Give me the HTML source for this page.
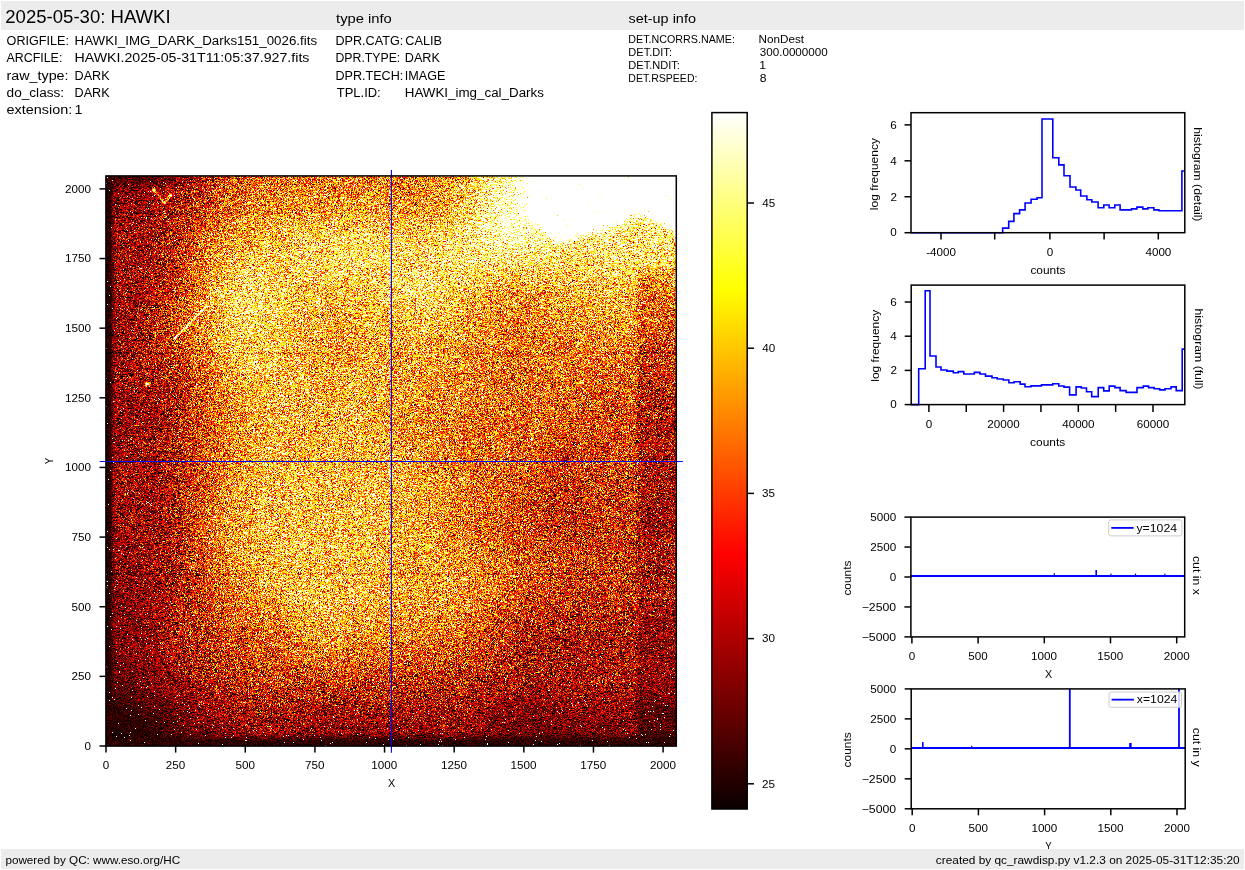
<!DOCTYPE html>
<html><head><meta charset="utf-8"><title>HAWKI</title>
<style>
html,body{margin:0;padding:0;background:#fff;width:1245px;height:870px;overflow:hidden;position:relative}
#hm{position:absolute;left:106px;top:176px;width:570px;height:570px}
svg.main{position:absolute;left:0;top:0}
text{font-family:"Liberation Sans",sans-serif}
</style></head><body>
<svg style="position:absolute;left:106px;top:176px" width="570" height="570" shape-rendering="crispEdges"><rect x="0" y="0" width="30" height="30" fill="#620502"/><rect x="30" y="0" width="30" height="30" fill="#881305"/><rect x="60" y="0" width="30" height="30" fill="#a32206"/><rect x="90" y="0" width="30" height="30" fill="#c2430a"/><rect x="120" y="0" width="30" height="30" fill="#de6913"/><rect x="150" y="0" width="30" height="30" fill="#e57b1b"/><rect x="180" y="0" width="30" height="30" fill="#ea841d"/><rect x="210" y="0" width="30" height="30" fill="#e98620"/><rect x="240" y="0" width="30" height="30" fill="#eb8820"/><rect x="270" y="0" width="30" height="30" fill="#e0832a"/><rect x="300" y="0" width="30" height="30" fill="#e9881d"/><rect x="330" y="0" width="30" height="30" fill="#efa335"/><rect x="360" y="0" width="30" height="30" fill="#f7d372"/><rect x="390" y="0" width="30" height="30" fill="#f9f2c1"/><rect x="420" y="0" width="30" height="30" fill="#f9f9f7"/><rect x="450" y="0" width="30" height="30" fill="#f9f9f9"/><rect x="480" y="0" width="30" height="30" fill="#f9f9f8"/><rect x="510" y="0" width="30" height="30" fill="#f9f9f8"/><rect x="540" y="0" width="30" height="30" fill="#f5f5f5"/><rect x="0" y="30" width="30" height="30" fill="#7d0b02"/><rect x="30" y="30" width="30" height="30" fill="#9f1904"/><rect x="60" y="30" width="30" height="30" fill="#b93304"/><rect x="90" y="30" width="30" height="30" fill="#de5f0e"/><rect x="120" y="30" width="30" height="30" fill="#ee8a20"/><rect x="150" y="30" width="30" height="30" fill="#f59f2f"/><rect x="180" y="30" width="30" height="30" fill="#f5a934"/><rect x="210" y="30" width="30" height="30" fill="#f8ae3b"/><rect x="240" y="30" width="30" height="30" fill="#f8b63f"/><rect x="270" y="30" width="30" height="30" fill="#f0a543"/><rect x="300" y="30" width="30" height="30" fill="#f8b03b"/><rect x="330" y="30" width="30" height="30" fill="#fbc44e"/><rect x="360" y="30" width="30" height="30" fill="#fee48e"/><rect x="390" y="30" width="30" height="30" fill="#fffac8"/><rect x="420" y="30" width="30" height="30" fill="#fffced"/><rect x="450" y="30" width="30" height="30" fill="#fffefc"/><rect x="480" y="30" width="30" height="30" fill="#fefced"/><rect x="510" y="30" width="30" height="30" fill="#feefb9"/><rect x="540" y="30" width="30" height="30" fill="#faf2cd"/><rect x="0" y="60" width="30" height="30" fill="#820f01"/><rect x="30" y="60" width="30" height="30" fill="#a11c04"/><rect x="60" y="60" width="30" height="30" fill="#c43f09"/><rect x="90" y="60" width="30" height="30" fill="#ec8521"/><rect x="120" y="60" width="30" height="30" fill="#f6ac39"/><rect x="150" y="60" width="30" height="30" fill="#fabd46"/><rect x="180" y="60" width="30" height="30" fill="#fbc75a"/><rect x="210" y="60" width="30" height="30" fill="#fdce5d"/><rect x="240" y="60" width="30" height="30" fill="#fed562"/><rect x="270" y="60" width="30" height="30" fill="#f4ca62"/><rect x="300" y="60" width="30" height="30" fill="#fccb60"/><rect x="330" y="60" width="30" height="30" fill="#fdd96f"/><rect x="360" y="60" width="30" height="30" fill="#fde284"/><rect x="390" y="60" width="30" height="30" fill="#fee894"/><rect x="420" y="60" width="30" height="30" fill="#fee587"/><rect x="450" y="60" width="30" height="30" fill="#fdde83"/><rect x="480" y="60" width="30" height="30" fill="#fdd975"/><rect x="510" y="60" width="30" height="30" fill="#fcd973"/><rect x="540" y="60" width="30" height="30" fill="#f9d66e"/><rect x="0" y="90" width="30" height="30" fill="#821203"/><rect x="30" y="90" width="30" height="30" fill="#ab1f04"/><rect x="60" y="90" width="30" height="30" fill="#d04808"/><rect x="90" y="90" width="30" height="30" fill="#f29a2c"/><rect x="120" y="90" width="30" height="30" fill="#fbc859"/><rect x="150" y="90" width="30" height="30" fill="#fdca56"/><rect x="180" y="90" width="30" height="30" fill="#fac251"/><rect x="210" y="90" width="30" height="30" fill="#fcc54f"/><rect x="240" y="90" width="30" height="30" fill="#fbc250"/><rect x="270" y="90" width="30" height="30" fill="#f2c465"/><rect x="300" y="90" width="30" height="30" fill="#fdd66f"/><rect x="330" y="90" width="30" height="30" fill="#fbce5c"/><rect x="360" y="90" width="30" height="30" fill="#fbc550"/><rect x="390" y="90" width="30" height="30" fill="#f8b241"/><rect x="420" y="90" width="30" height="30" fill="#f9b646"/><rect x="450" y="90" width="30" height="30" fill="#fabe49"/><rect x="480" y="90" width="30" height="30" fill="#fac453"/><rect x="510" y="90" width="30" height="30" fill="#f8b644"/><rect x="540" y="90" width="30" height="30" fill="#ee9526"/><rect x="0" y="120" width="30" height="30" fill="#7e0d02"/><rect x="30" y="120" width="30" height="30" fill="#af2804"/><rect x="60" y="120" width="30" height="30" fill="#da6312"/><rect x="90" y="120" width="30" height="30" fill="#f5a339"/><rect x="120" y="120" width="30" height="30" fill="#fcd160"/><rect x="150" y="120" width="30" height="30" fill="#fdce57"/><rect x="180" y="120" width="30" height="30" fill="#f9b842"/><rect x="210" y="120" width="30" height="30" fill="#f7ad3d"/><rect x="240" y="120" width="30" height="30" fill="#f9b83f"/><rect x="270" y="120" width="30" height="30" fill="#f1b44b"/><rect x="300" y="120" width="30" height="30" fill="#fbc655"/><rect x="330" y="120" width="30" height="30" fill="#f9b843"/><rect x="360" y="120" width="30" height="30" fill="#f49c2d"/><rect x="390" y="120" width="30" height="30" fill="#f18b22"/><rect x="420" y="120" width="30" height="30" fill="#f19025"/><rect x="450" y="120" width="30" height="30" fill="#f49f2b"/><rect x="480" y="120" width="30" height="30" fill="#f6a430"/><rect x="510" y="120" width="30" height="30" fill="#f09228"/><rect x="540" y="120" width="30" height="30" fill="#e06912"/><rect x="0" y="150" width="30" height="30" fill="#7e0e01"/><rect x="30" y="150" width="30" height="30" fill="#af2903"/><rect x="60" y="150" width="30" height="30" fill="#d55b11"/><rect x="90" y="150" width="30" height="30" fill="#ef982e"/><rect x="120" y="150" width="30" height="30" fill="#fac24e"/><rect x="150" y="150" width="30" height="30" fill="#fac147"/><rect x="180" y="150" width="30" height="30" fill="#f7ab39"/><rect x="210" y="150" width="30" height="30" fill="#f59f2f"/><rect x="240" y="150" width="30" height="30" fill="#f5a633"/><rect x="270" y="150" width="30" height="30" fill="#eb9f3a"/><rect x="300" y="150" width="30" height="30" fill="#f8ac39"/><rect x="330" y="150" width="30" height="30" fill="#f39f2c"/><rect x="360" y="150" width="30" height="30" fill="#f18e23"/><rect x="390" y="150" width="30" height="30" fill="#eb7819"/><rect x="420" y="150" width="30" height="30" fill="#e97f1a"/><rect x="450" y="150" width="30" height="30" fill="#ed811f"/><rect x="480" y="150" width="30" height="30" fill="#ee8521"/><rect x="510" y="150" width="30" height="30" fill="#e47619"/><rect x="540" y="150" width="30" height="30" fill="#ce4d0e"/><rect x="0" y="180" width="30" height="30" fill="#811002"/><rect x="30" y="180" width="30" height="30" fill="#ae2605"/><rect x="60" y="180" width="30" height="30" fill="#c24008"/><rect x="90" y="180" width="30" height="30" fill="#e97a1b"/><rect x="120" y="180" width="30" height="30" fill="#f8b440"/><rect x="150" y="180" width="30" height="30" fill="#faba48"/><rect x="180" y="180" width="30" height="30" fill="#f8af41"/><rect x="210" y="180" width="30" height="30" fill="#f7a833"/><rect x="240" y="180" width="30" height="30" fill="#f6a937"/><rect x="270" y="180" width="30" height="30" fill="#eb9a3c"/><rect x="300" y="180" width="30" height="30" fill="#f49c2c"/><rect x="330" y="180" width="30" height="30" fill="#f29024"/><rect x="360" y="180" width="30" height="30" fill="#ec7e1d"/><rect x="390" y="180" width="30" height="30" fill="#e47617"/><rect x="420" y="180" width="30" height="30" fill="#e77513"/><rect x="450" y="180" width="30" height="30" fill="#ea7817"/><rect x="480" y="180" width="30" height="30" fill="#e56b17"/><rect x="510" y="180" width="30" height="30" fill="#d65b10"/><rect x="540" y="180" width="30" height="30" fill="#c43d0a"/><rect x="0" y="210" width="30" height="30" fill="#7b0b02"/><rect x="30" y="210" width="30" height="30" fill="#a01603"/><rect x="60" y="210" width="30" height="30" fill="#b83406"/><rect x="90" y="210" width="30" height="30" fill="#e06a10"/><rect x="120" y="210" width="30" height="30" fill="#f4992b"/><rect x="150" y="210" width="30" height="30" fill="#f9b03e"/><rect x="180" y="210" width="30" height="30" fill="#f6ad3f"/><rect x="210" y="210" width="30" height="30" fill="#f8a935"/><rect x="240" y="210" width="30" height="30" fill="#f5ac3b"/><rect x="270" y="210" width="30" height="30" fill="#ec9c37"/><rect x="300" y="210" width="30" height="30" fill="#f09324"/><rect x="330" y="210" width="30" height="30" fill="#ef8a24"/><rect x="360" y="210" width="30" height="30" fill="#e97b1a"/><rect x="390" y="210" width="30" height="30" fill="#e57519"/><rect x="420" y="210" width="30" height="30" fill="#e87016"/><rect x="450" y="210" width="30" height="30" fill="#de6813"/><rect x="480" y="210" width="30" height="30" fill="#d7580c"/><rect x="510" y="210" width="30" height="30" fill="#cc4e0c"/><rect x="540" y="210" width="30" height="30" fill="#ac2c04"/><rect x="0" y="240" width="30" height="30" fill="#7a0b02"/><rect x="30" y="240" width="30" height="30" fill="#9f1903"/><rect x="60" y="240" width="30" height="30" fill="#ba3607"/><rect x="90" y="240" width="30" height="30" fill="#e06310"/><rect x="120" y="240" width="30" height="30" fill="#f29727"/><rect x="150" y="240" width="30" height="30" fill="#f9ad38"/><rect x="180" y="240" width="30" height="30" fill="#f8ac3b"/><rect x="210" y="240" width="30" height="30" fill="#f6ac3a"/><rect x="240" y="240" width="30" height="30" fill="#f6ad3c"/><rect x="270" y="240" width="30" height="30" fill="#ec9935"/><rect x="300" y="240" width="30" height="30" fill="#f18e21"/><rect x="330" y="240" width="30" height="30" fill="#ec7c1d"/><rect x="360" y="240" width="30" height="30" fill="#e67013"/><rect x="390" y="240" width="30" height="30" fill="#e56512"/><rect x="420" y="240" width="30" height="30" fill="#e06813"/><rect x="450" y="240" width="30" height="30" fill="#d8570c"/><rect x="480" y="240" width="30" height="30" fill="#d7500b"/><rect x="510" y="240" width="30" height="30" fill="#c94209"/><rect x="540" y="240" width="30" height="30" fill="#a81e04"/><rect x="0" y="270" width="30" height="30" fill="#7f0d0b"/><rect x="30" y="270" width="30" height="30" fill="#99150a"/><rect x="60" y="270" width="30" height="30" fill="#b5320d"/><rect x="90" y="270" width="30" height="30" fill="#d96219"/><rect x="120" y="270" width="30" height="30" fill="#ea9130"/><rect x="150" y="270" width="30" height="30" fill="#f1a944"/><rect x="180" y="270" width="30" height="30" fill="#efa93f"/><rect x="210" y="270" width="30" height="30" fill="#efaa43"/><rect x="240" y="270" width="30" height="30" fill="#efa63f"/><rect x="270" y="270" width="30" height="30" fill="#e69c46"/><rect x="300" y="270" width="30" height="30" fill="#e98f30"/><rect x="330" y="270" width="30" height="30" fill="#e17b24"/><rect x="360" y="270" width="30" height="30" fill="#de6d1d"/><rect x="390" y="270" width="30" height="30" fill="#db671c"/><rect x="420" y="270" width="30" height="30" fill="#d35213"/><rect x="450" y="270" width="30" height="30" fill="#c74212"/><rect x="480" y="270" width="30" height="30" fill="#ca4613"/><rect x="510" y="270" width="30" height="30" fill="#c14213"/><rect x="540" y="270" width="30" height="30" fill="#9f1d0c"/><rect x="0" y="300" width="30" height="30" fill="#831001"/><rect x="30" y="300" width="30" height="30" fill="#9d1604"/><rect x="60" y="300" width="30" height="30" fill="#ba3204"/><rect x="90" y="300" width="30" height="30" fill="#e06711"/><rect x="120" y="300" width="30" height="30" fill="#f5a231"/><rect x="150" y="300" width="30" height="30" fill="#f7b144"/><rect x="180" y="300" width="30" height="30" fill="#f9bc44"/><rect x="210" y="300" width="30" height="30" fill="#f7b144"/><rect x="240" y="300" width="30" height="30" fill="#fab646"/><rect x="270" y="300" width="30" height="30" fill="#efa941"/><rect x="300" y="300" width="30" height="30" fill="#f5a12d"/><rect x="330" y="300" width="30" height="30" fill="#f18e23"/><rect x="360" y="300" width="30" height="30" fill="#e77217"/><rect x="390" y="300" width="30" height="30" fill="#df6010"/><rect x="420" y="300" width="30" height="30" fill="#c9460a"/><rect x="450" y="300" width="30" height="30" fill="#c53c06"/><rect x="480" y="300" width="30" height="30" fill="#c8470a"/><rect x="510" y="300" width="30" height="30" fill="#bd3c09"/><rect x="540" y="300" width="30" height="30" fill="#9f1a02"/><rect x="0" y="330" width="30" height="30" fill="#820e01"/><rect x="30" y="330" width="30" height="30" fill="#991401"/><rect x="60" y="330" width="30" height="30" fill="#b63204"/><rect x="90" y="330" width="30" height="30" fill="#e77217"/><rect x="120" y="330" width="30" height="30" fill="#f5a130"/><rect x="150" y="330" width="30" height="30" fill="#f9b647"/><rect x="180" y="330" width="30" height="30" fill="#fab844"/><rect x="210" y="330" width="30" height="30" fill="#fab745"/><rect x="240" y="330" width="30" height="30" fill="#f9b740"/><rect x="270" y="330" width="30" height="30" fill="#efa740"/><rect x="300" y="330" width="30" height="30" fill="#f6a430"/><rect x="330" y="330" width="30" height="30" fill="#ee881e"/><rect x="360" y="330" width="30" height="30" fill="#e36c15"/><rect x="390" y="330" width="30" height="30" fill="#da590f"/><rect x="420" y="330" width="30" height="30" fill="#c8430b"/><rect x="450" y="330" width="30" height="30" fill="#c03a08"/><rect x="480" y="330" width="30" height="30" fill="#c64208"/><rect x="510" y="330" width="30" height="30" fill="#ba3506"/><rect x="540" y="330" width="30" height="30" fill="#951503"/><rect x="0" y="360" width="30" height="30" fill="#7b0904"/><rect x="30" y="360" width="30" height="30" fill="#9d1603"/><rect x="60" y="360" width="30" height="30" fill="#b73308"/><rect x="90" y="360" width="30" height="30" fill="#e26713"/><rect x="120" y="360" width="30" height="30" fill="#f4a232"/><rect x="150" y="360" width="30" height="30" fill="#f8b23e"/><rect x="180" y="360" width="30" height="30" fill="#fabd49"/><rect x="210" y="360" width="30" height="30" fill="#fbba47"/><rect x="240" y="360" width="30" height="30" fill="#f9ba43"/><rect x="270" y="360" width="30" height="30" fill="#eda540"/><rect x="300" y="360" width="30" height="30" fill="#f4a62f"/><rect x="330" y="360" width="30" height="30" fill="#f29223"/><rect x="360" y="360" width="30" height="30" fill="#e97e1a"/><rect x="390" y="360" width="30" height="30" fill="#db620f"/><rect x="420" y="360" width="30" height="30" fill="#d4540c"/><rect x="450" y="360" width="30" height="30" fill="#cb4708"/><rect x="480" y="360" width="30" height="30" fill="#c94007"/><rect x="510" y="360" width="30" height="30" fill="#bc3606"/><rect x="540" y="360" width="30" height="30" fill="#a52005"/><rect x="0" y="390" width="30" height="30" fill="#720902"/><rect x="30" y="390" width="30" height="30" fill="#951002"/><rect x="60" y="390" width="30" height="30" fill="#ad2b05"/><rect x="90" y="390" width="30" height="30" fill="#d5580d"/><rect x="120" y="390" width="30" height="30" fill="#ed8921"/><rect x="150" y="390" width="30" height="30" fill="#f7ac3d"/><rect x="180" y="390" width="30" height="30" fill="#f8b744"/><rect x="210" y="390" width="30" height="30" fill="#f8b440"/><rect x="240" y="390" width="30" height="30" fill="#f9b440"/><rect x="270" y="390" width="30" height="30" fill="#eda13d"/><rect x="300" y="390" width="30" height="30" fill="#f4a02b"/><rect x="330" y="390" width="30" height="30" fill="#f29b2e"/><rect x="360" y="390" width="30" height="30" fill="#ee831c"/><rect x="390" y="390" width="30" height="30" fill="#e36912"/><rect x="420" y="390" width="30" height="30" fill="#d4500d"/><rect x="450" y="390" width="30" height="30" fill="#c74109"/><rect x="480" y="390" width="30" height="30" fill="#c64008"/><rect x="510" y="390" width="30" height="30" fill="#b83605"/><rect x="540" y="390" width="30" height="30" fill="#a12306"/><rect x="0" y="420" width="30" height="30" fill="#6d0502"/><rect x="30" y="420" width="30" height="30" fill="#980e02"/><rect x="60" y="420" width="30" height="30" fill="#b32c05"/><rect x="90" y="420" width="30" height="30" fill="#cd4c0a"/><rect x="120" y="420" width="30" height="30" fill="#e97316"/><rect x="150" y="420" width="30" height="30" fill="#ef8b20"/><rect x="180" y="420" width="30" height="30" fill="#f6ac36"/><rect x="210" y="420" width="30" height="30" fill="#f9b242"/><rect x="240" y="420" width="30" height="30" fill="#f6a93a"/><rect x="270" y="420" width="30" height="30" fill="#eb9634"/><rect x="300" y="420" width="30" height="30" fill="#f3942b"/><rect x="330" y="420" width="30" height="30" fill="#ee8d26"/><rect x="360" y="420" width="30" height="30" fill="#e77118"/><rect x="390" y="420" width="30" height="30" fill="#d1500b"/><rect x="420" y="420" width="30" height="30" fill="#c13808"/><rect x="450" y="420" width="30" height="30" fill="#b83607"/><rect x="480" y="420" width="30" height="30" fill="#b93204"/><rect x="510" y="420" width="30" height="30" fill="#af2a07"/><rect x="540" y="420" width="30" height="30" fill="#991703"/><rect x="0" y="450" width="30" height="30" fill="#700502"/><rect x="30" y="450" width="30" height="30" fill="#8e0e04"/><rect x="60" y="450" width="30" height="30" fill="#b12905"/><rect x="90" y="450" width="30" height="30" fill="#c03c08"/><rect x="120" y="450" width="30" height="30" fill="#d2500b"/><rect x="150" y="450" width="30" height="30" fill="#e16613"/><rect x="180" y="450" width="30" height="30" fill="#ec821f"/><rect x="210" y="450" width="30" height="30" fill="#f29528"/><rect x="240" y="450" width="30" height="30" fill="#ec831d"/><rect x="270" y="450" width="30" height="30" fill="#e17925"/><rect x="300" y="450" width="30" height="30" fill="#e77618"/><rect x="330" y="450" width="30" height="30" fill="#e16a13"/><rect x="360" y="450" width="30" height="30" fill="#d4500a"/><rect x="390" y="450" width="30" height="30" fill="#bb3607"/><rect x="420" y="450" width="30" height="30" fill="#a62302"/><rect x="450" y="450" width="30" height="30" fill="#a82503"/><rect x="480" y="450" width="30" height="30" fill="#a62002"/><rect x="510" y="450" width="30" height="30" fill="#a21c03"/><rect x="540" y="450" width="30" height="30" fill="#8c0c01"/><rect x="0" y="480" width="30" height="30" fill="#5c0202"/><rect x="30" y="480" width="30" height="30" fill="#830702"/><rect x="60" y="480" width="30" height="30" fill="#991802"/><rect x="90" y="480" width="30" height="30" fill="#b12e04"/><rect x="120" y="480" width="30" height="30" fill="#c33e05"/><rect x="150" y="480" width="30" height="30" fill="#d1500b"/><rect x="180" y="480" width="30" height="30" fill="#d2550c"/><rect x="210" y="480" width="30" height="30" fill="#d8580f"/><rect x="240" y="480" width="30" height="30" fill="#d5540d"/><rect x="270" y="480" width="30" height="30" fill="#c74a15"/><rect x="300" y="480" width="30" height="30" fill="#ca470a"/><rect x="330" y="480" width="30" height="30" fill="#c34309"/><rect x="360" y="480" width="30" height="30" fill="#b83406"/><rect x="390" y="480" width="30" height="30" fill="#ac2704"/><rect x="420" y="480" width="30" height="30" fill="#a12103"/><rect x="450" y="480" width="30" height="30" fill="#a71c05"/><rect x="480" y="480" width="30" height="30" fill="#a82004"/><rect x="510" y="480" width="30" height="30" fill="#a21903"/><rect x="540" y="480" width="30" height="30" fill="#8f0a02"/><rect x="0" y="510" width="30" height="30" fill="#3d0202"/><rect x="30" y="510" width="30" height="30" fill="#630403"/><rect x="60" y="510" width="30" height="30" fill="#820803"/><rect x="90" y="510" width="30" height="30" fill="#9f1504"/><rect x="120" y="510" width="30" height="30" fill="#aa2203"/><rect x="150" y="510" width="30" height="30" fill="#b02b04"/><rect x="180" y="510" width="30" height="30" fill="#b02603"/><rect x="210" y="510" width="30" height="30" fill="#a82603"/><rect x="240" y="510" width="30" height="30" fill="#ae2806"/><rect x="270" y="510" width="30" height="30" fill="#a7250c"/><rect x="300" y="510" width="30" height="30" fill="#ad2203"/><rect x="330" y="510" width="30" height="30" fill="#ab2303"/><rect x="360" y="510" width="30" height="30" fill="#a31902"/><rect x="390" y="510" width="30" height="30" fill="#941001"/><rect x="420" y="510" width="30" height="30" fill="#8c0b01"/><rect x="450" y="510" width="30" height="30" fill="#961203"/><rect x="480" y="510" width="30" height="30" fill="#940d01"/><rect x="510" y="510" width="30" height="30" fill="#880c01"/><rect x="540" y="510" width="30" height="30" fill="#6f0604"/><rect x="0" y="540" width="30" height="30" fill="#290202"/><rect x="30" y="540" width="30" height="30" fill="#330101"/><rect x="60" y="540" width="30" height="30" fill="#500302"/><rect x="90" y="540" width="30" height="30" fill="#680603"/><rect x="120" y="540" width="30" height="30" fill="#750b03"/><rect x="150" y="540" width="30" height="30" fill="#790c03"/><rect x="180" y="540" width="30" height="30" fill="#750c02"/><rect x="210" y="540" width="30" height="30" fill="#750a03"/><rect x="240" y="540" width="30" height="30" fill="#730902"/><rect x="270" y="540" width="30" height="30" fill="#6f090c"/><rect x="300" y="540" width="30" height="30" fill="#730a01"/><rect x="330" y="540" width="30" height="30" fill="#770d04"/><rect x="360" y="540" width="30" height="30" fill="#6d0602"/><rect x="390" y="540" width="30" height="30" fill="#5f0301"/><rect x="420" y="540" width="30" height="30" fill="#5d0303"/><rect x="450" y="540" width="30" height="30" fill="#5f0201"/><rect x="480" y="540" width="30" height="30" fill="#630301"/><rect x="510" y="540" width="30" height="30" fill="#5b0502"/><rect x="540" y="540" width="30" height="30" fill="#470404"/></svg>
<canvas id="hm" width="570" height="570"></canvas>
<svg class="main" width="1245" height="870" viewBox="0 0 1245 870">
<rect x="1" y="1" width="1243" height="29" fill="#ececec"/>
<rect x="1" y="849" width="1243" height="20" fill="#ececec"/>
<text x="5.27" y="22.90" font-size="17.75" textLength="165.40" lengthAdjust="spacingAndGlyphs" fill="#000">2025-05-30: HAWKI</text>
<text x="336.06" y="22.90" font-size="13.23" textLength="55.78" lengthAdjust="spacingAndGlyphs" fill="#000">type info</text>
<text x="628.52" y="23.00" font-size="13.23" textLength="67.42" lengthAdjust="spacingAndGlyphs" fill="#000">set-up info</text>
<text x="6.60" y="45.20" font-size="13.23" textLength="62.34" lengthAdjust="spacingAndGlyphs" fill="#000">ORIGFILE:</text>
<text x="74.57" y="45.20" font-size="13.23" textLength="242.54" lengthAdjust="spacingAndGlyphs" fill="#000">HAWKI_IMG_DARK_Darks151_0026.fits</text>
<text x="6.60" y="61.90" font-size="13.23" textLength="55.73" lengthAdjust="spacingAndGlyphs" fill="#000">ARCFILE:</text>
<text x="74.57" y="61.90" font-size="13.23" textLength="234.86" lengthAdjust="spacingAndGlyphs" fill="#000">HAWKI.2025-05-31T11:05:37.927.fits</text>
<text x="6.60" y="79.90" font-size="13.23" textLength="61.90" lengthAdjust="spacingAndGlyphs" fill="#000">raw_type:</text>
<text x="74.57" y="79.90" font-size="13.23" textLength="35.12" lengthAdjust="spacingAndGlyphs" fill="#000">DARK</text>
<text x="6.60" y="97.20" font-size="13.23" textLength="57.53" lengthAdjust="spacingAndGlyphs" fill="#000">do_class:</text>
<text x="74.57" y="97.20" font-size="13.23" textLength="35.12" lengthAdjust="spacingAndGlyphs" fill="#000">DARK</text>
<text x="6.60" y="113.80" font-size="13.23" textLength="65.67" lengthAdjust="spacingAndGlyphs" fill="#000">extension:</text>
<text x="74.41" y="113.80" font-size="13.23" textLength="8.02" lengthAdjust="spacingAndGlyphs" fill="#000">1</text>
<text x="335.47" y="45.00" font-size="13.23" textLength="67.76" lengthAdjust="spacingAndGlyphs" fill="#000">DPR.CATG:</text>
<text x="405.29" y="45.00" font-size="13.23" textLength="36.80" lengthAdjust="spacingAndGlyphs" fill="#000">CALIB</text>
<text x="335.47" y="61.80" font-size="13.23" textLength="64.81" lengthAdjust="spacingAndGlyphs" fill="#000">DPR.TYPE:</text>
<text x="404.77" y="61.80" font-size="13.23" textLength="35.12" lengthAdjust="spacingAndGlyphs" fill="#000">DARK</text>
<text x="335.47" y="79.50" font-size="13.23" textLength="67.79" lengthAdjust="spacingAndGlyphs" fill="#000">DPR.TECH:</text>
<text x="404.77" y="79.50" font-size="13.23" textLength="40.71" lengthAdjust="spacingAndGlyphs" fill="#000">IMAGE</text>
<text x="336.74" y="96.80" font-size="13.23" textLength="43.98" lengthAdjust="spacingAndGlyphs" fill="#000">TPL.ID:</text>
<text x="404.77" y="96.80" font-size="13.23" textLength="139.13" lengthAdjust="spacingAndGlyphs" fill="#000">HAWKI_img_cal_Darks</text>
<text x="628.36" y="42.90" font-size="11.13" textLength="106.54" lengthAdjust="spacingAndGlyphs" fill="#000">DET.NCORRS.NAME:</text>
<text x="758.56" y="42.90" font-size="11.13" textLength="45.49" lengthAdjust="spacingAndGlyphs" fill="#000">NonDest</text>
<text x="628.36" y="55.70" font-size="11.13" textLength="43.62" lengthAdjust="spacingAndGlyphs" fill="#000">DET.DIT:</text>
<text x="759.73" y="55.70" font-size="11.13" textLength="68.05" lengthAdjust="spacingAndGlyphs" fill="#000">300.0000000</text>
<text x="628.36" y="68.60" font-size="11.13" textLength="51.55" lengthAdjust="spacingAndGlyphs" fill="#000">DET.NDIT:</text>
<text x="759.33" y="68.60" font-size="11.13" textLength="6.74" lengthAdjust="spacingAndGlyphs" fill="#000">1</text>
<text x="628.36" y="81.60" font-size="11.13" textLength="69.06" lengthAdjust="spacingAndGlyphs" fill="#000">DET.RSPEED:</text>
<text x="759.78" y="81.60" font-size="11.13" textLength="6.74" lengthAdjust="spacingAndGlyphs" fill="#000">8</text>
<!--hm-->
<line x1="391.40" y1="170.10" x2="391.40" y2="752.80" stroke="#0000ff" stroke-width="1.1"/>
<line x1="99.70" y1="461.50" x2="682.90" y2="461.50" stroke="#0000ff" stroke-width="1.1"/>
<rect x="105.90" y="175.90" width="570.40" height="570.20" fill="none" stroke="#000" stroke-width="1.5"/>
<line x1="99.50" y1="746.00" x2="105.90" y2="746.00" stroke="#000" stroke-width="1.5"/>
<text x="84.49" y="749.77" font-size="10.71" textLength="6.49" lengthAdjust="spacingAndGlyphs" fill="#000">0</text>
<line x1="106.00" y1="746.10" x2="106.00" y2="752.60" stroke="#000" stroke-width="1.5"/>
<text x="102.76" y="768.80" font-size="10.71" textLength="6.49" lengthAdjust="spacingAndGlyphs" fill="#000">0</text>
<line x1="99.50" y1="676.36" x2="105.90" y2="676.36" stroke="#000" stroke-width="1.5"/>
<text x="71.51" y="680.14" font-size="10.71" textLength="19.47" lengthAdjust="spacingAndGlyphs" fill="#000">250</text>
<line x1="175.64" y1="746.10" x2="175.64" y2="752.60" stroke="#000" stroke-width="1.5"/>
<text x="165.87" y="768.80" font-size="10.71" textLength="19.47" lengthAdjust="spacingAndGlyphs" fill="#000">250</text>
<line x1="99.50" y1="606.73" x2="105.90" y2="606.73" stroke="#000" stroke-width="1.5"/>
<text x="71.51" y="610.50" font-size="10.71" textLength="19.47" lengthAdjust="spacingAndGlyphs" fill="#000">500</text>
<line x1="245.28" y1="746.10" x2="245.28" y2="752.60" stroke="#000" stroke-width="1.5"/>
<text x="235.49" y="768.80" font-size="10.71" textLength="19.47" lengthAdjust="spacingAndGlyphs" fill="#000">500</text>
<line x1="99.50" y1="537.09" x2="105.90" y2="537.09" stroke="#000" stroke-width="1.5"/>
<text x="71.51" y="540.86" font-size="10.71" textLength="19.47" lengthAdjust="spacingAndGlyphs" fill="#000">750</text>
<line x1="314.91" y1="746.10" x2="314.91" y2="752.60" stroke="#000" stroke-width="1.5"/>
<text x="305.10" y="768.80" font-size="10.71" textLength="19.47" lengthAdjust="spacingAndGlyphs" fill="#000">750</text>
<line x1="99.50" y1="467.45" x2="105.90" y2="467.45" stroke="#000" stroke-width="1.5"/>
<text x="65.01" y="471.22" font-size="10.71" textLength="25.96" lengthAdjust="spacingAndGlyphs" fill="#000">1000</text>
<line x1="384.55" y1="746.10" x2="384.55" y2="752.60" stroke="#000" stroke-width="1.5"/>
<text x="371.35" y="768.80" font-size="10.71" textLength="25.96" lengthAdjust="spacingAndGlyphs" fill="#000">1000</text>
<line x1="99.50" y1="397.81" x2="105.90" y2="397.81" stroke="#000" stroke-width="1.5"/>
<text x="65.01" y="401.59" font-size="10.71" textLength="25.96" lengthAdjust="spacingAndGlyphs" fill="#000">1250</text>
<line x1="454.19" y1="746.10" x2="454.19" y2="752.60" stroke="#000" stroke-width="1.5"/>
<text x="440.98" y="768.80" font-size="10.71" textLength="25.96" lengthAdjust="spacingAndGlyphs" fill="#000">1250</text>
<line x1="99.50" y1="328.17" x2="105.90" y2="328.17" stroke="#000" stroke-width="1.5"/>
<text x="65.01" y="331.95" font-size="10.71" textLength="25.96" lengthAdjust="spacingAndGlyphs" fill="#000">1500</text>
<line x1="523.83" y1="746.10" x2="523.83" y2="752.60" stroke="#000" stroke-width="1.5"/>
<text x="510.62" y="768.80" font-size="10.71" textLength="25.96" lengthAdjust="spacingAndGlyphs" fill="#000">1500</text>
<line x1="99.50" y1="258.54" x2="105.90" y2="258.54" stroke="#000" stroke-width="1.5"/>
<text x="65.01" y="262.31" font-size="10.71" textLength="25.96" lengthAdjust="spacingAndGlyphs" fill="#000">1750</text>
<line x1="593.46" y1="746.10" x2="593.46" y2="752.60" stroke="#000" stroke-width="1.5"/>
<text x="580.26" y="768.80" font-size="10.71" textLength="25.96" lengthAdjust="spacingAndGlyphs" fill="#000">1750</text>
<line x1="99.50" y1="188.90" x2="105.90" y2="188.90" stroke="#000" stroke-width="1.5"/>
<text x="65.01" y="192.67" font-size="10.71" textLength="25.96" lengthAdjust="spacingAndGlyphs" fill="#000">2000</text>
<line x1="663.10" y1="746.10" x2="663.10" y2="752.60" stroke="#000" stroke-width="1.5"/>
<text x="650.08" y="768.80" font-size="10.71" textLength="25.96" lengthAdjust="spacingAndGlyphs" fill="#000">2000</text>
<text x="387.91" y="786.90" font-size="11.03" textLength="7.19" lengthAdjust="spacingAndGlyphs" fill="#000">X</text>
<text transform="translate(53.00,461.00) rotate(-90)" x="-3.20" y="0" font-size="11.03" textLength="6.41" lengthAdjust="spacingAndGlyphs">Y</text>
<defs><linearGradient id="hot" x1="0" y1="1" x2="0" y2="0"><stop offset="0" stop-color="rgb(10,0,0)"/><stop offset="0.365079" stop-color="rgb(255,0,0)"/><stop offset="0.746032" stop-color="rgb(255,255,0)"/><stop offset="1" stop-color="rgb(255,255,255)"/></linearGradient></defs>
<rect x="711.9" y="112.6" width="35.3" height="696.4" fill="url(#hot)"/>
<rect x="711.90" y="112.60" width="35.30" height="696.40" fill="none" stroke="#000" stroke-width="1.5"/>
<line x1="747.20" y1="783.80" x2="754.00" y2="783.80" stroke="#000" stroke-width="1.5"/>
<text x="761.96" y="787.57" font-size="10.71" textLength="12.98" lengthAdjust="spacingAndGlyphs" fill="#000">25</text>
<line x1="747.20" y1="638.60" x2="754.00" y2="638.60" stroke="#000" stroke-width="1.5"/>
<text x="761.92" y="642.37" font-size="10.71" textLength="12.98" lengthAdjust="spacingAndGlyphs" fill="#000">30</text>
<line x1="747.20" y1="493.40" x2="754.00" y2="493.40" stroke="#000" stroke-width="1.5"/>
<text x="761.92" y="497.17" font-size="10.71" textLength="12.98" lengthAdjust="spacingAndGlyphs" fill="#000">35</text>
<line x1="747.20" y1="348.20" x2="754.00" y2="348.20" stroke="#000" stroke-width="1.5"/>
<text x="762.20" y="351.97" font-size="10.71" textLength="12.98" lengthAdjust="spacingAndGlyphs" fill="#000">40</text>
<line x1="747.20" y1="203.00" x2="754.00" y2="203.00" stroke="#000" stroke-width="1.5"/>
<text x="762.20" y="206.77" font-size="10.71" textLength="12.98" lengthAdjust="spacingAndGlyphs" fill="#000">45</text>
<path d="M911.00,232.70 H1002.70 V228.10 H1008.70 V221.40 H1013.90 V213.60 H1019.60 V209.90 H1025.10 V203.00 H1031.10 V199.20 H1037.10 V197.70 H1042.00 V119.00 H1052.80 V157.80 H1058.80 V164.90 H1064.00 V175.80 H1070.00 V187.00 H1075.90 V190.00 H1080.70 V196.00 H1086.90 V199.70 H1091.80 V202.00 H1098.10 V207.80 H1103.80 V205.00 H1109.10 V207.80 H1114.80 V205.00 H1120.10 V209.90 H1131.50 V208.90 H1136.90 V207.10 H1142.80 V208.90 H1147.90 V207.80 H1153.90 V209.90 H1158.90 V210.80 H1181.90 V171.00 H1184.70" fill="none" stroke="#0000ff" stroke-width="1.6" stroke-linejoin="miter"/>
<rect x="911.00" y="112.70" width="273.80" height="120.00" fill="none" stroke="#000" stroke-width="1.5"/>
<line x1="904.50" y1="232.70" x2="911.00" y2="232.70" stroke="#000" stroke-width="1.5"/>
<text x="890.29" y="236.47" font-size="10.71" textLength="6.49" lengthAdjust="spacingAndGlyphs" fill="#000">0</text>
<line x1="904.50" y1="196.76" x2="911.00" y2="196.76" stroke="#000" stroke-width="1.5"/>
<text x="890.63" y="200.53" font-size="10.71" textLength="6.49" lengthAdjust="spacingAndGlyphs" fill="#000">2</text>
<line x1="904.50" y1="160.82" x2="911.00" y2="160.82" stroke="#000" stroke-width="1.5"/>
<text x="890.18" y="164.59" font-size="10.71" textLength="6.49" lengthAdjust="spacingAndGlyphs" fill="#000">4</text>
<line x1="904.50" y1="124.88" x2="911.00" y2="124.88" stroke="#000" stroke-width="1.5"/>
<text x="890.26" y="128.65" font-size="10.71" textLength="6.49" lengthAdjust="spacingAndGlyphs" fill="#000">6</text>
<line x1="941.00" y1="232.70" x2="941.00" y2="239.50" stroke="#000" stroke-width="1.5"/>
<text x="926.27" y="255.90" font-size="10.71" textLength="29.64" lengthAdjust="spacingAndGlyphs" fill="#000">-4000</text>
<line x1="994.70" y1="232.70" x2="994.70" y2="239.50" stroke="#000" stroke-width="1.5"/>
<line x1="1049.90" y1="232.70" x2="1049.90" y2="239.50" stroke="#000" stroke-width="1.5"/>
<text x="1046.66" y="255.90" font-size="10.71" textLength="6.49" lengthAdjust="spacingAndGlyphs" fill="#000">0</text>
<line x1="1104.10" y1="232.70" x2="1104.10" y2="239.50" stroke="#000" stroke-width="1.5"/>
<line x1="1158.30" y1="232.70" x2="1158.30" y2="239.50" stroke="#000" stroke-width="1.5"/>
<text x="1145.41" y="255.90" font-size="10.71" textLength="25.96" lengthAdjust="spacingAndGlyphs" fill="#000">4000</text>
<text x="1030.42" y="273.50" font-size="11.03" textLength="35.09" lengthAdjust="spacingAndGlyphs" fill="#000">counts</text>
<text transform="translate(878.40,173.80) rotate(-90)" x="-36.34" y="0" font-size="11.03" textLength="72.01" lengthAdjust="spacingAndGlyphs">log frequency</text>
<text transform="translate(1194.30,174.30) rotate(90)" x="-47.16" y="0" font-size="11.03" textLength="94.27" lengthAdjust="spacingAndGlyphs">histogram (detail)</text>
<path d="M911.20,404.60 H918.70 V368.80 H925.20 V290.80 H930.00 V356.00 H936.00 V367.00 H941.00 V370.00 H946.90 V371.10 H953.30 V372.70 H958.20 V371.60 H963.80 V374.00 H974.30 V372.40 H979.90 V374.00 H985.50 V376.10 H992.00 V377.80 H997.20 V379.00 H1003.30 V380.00 H1008.90 V382.80 H1014.10 V381.80 H1020.20 V384.10 H1025.00 V386.80 H1031.00 V385.90 H1041.50 V384.90 H1052.80 V383.80 H1058.80 V386.00 H1064.00 V387.10 H1069.60 V394.90 H1076.10 V386.90 H1081.30 V388.00 H1086.50 V391.80 H1091.70 V396.60 H1098.20 V387.60 H1103.70 V390.90 H1109.20 V386.10 H1114.90 V387.60 H1120.10 V390.60 H1126.10 V392.40 H1137.00 V387.60 H1143.30 V386.10 H1148.50 V387.60 H1154.10 V388.80 H1159.70 V389.90 H1165.00 V388.80 H1171.00 V386.90 H1176.20 V390.60 H1182.20 V349.10 H1184.80" fill="none" stroke="#0000ff" stroke-width="1.6" stroke-linejoin="miter"/>
<rect x="911.20" y="285.10" width="273.60" height="119.50" fill="none" stroke="#000" stroke-width="1.5"/>
<line x1="904.70" y1="404.60" x2="911.20" y2="404.60" stroke="#000" stroke-width="1.5"/>
<text x="890.29" y="408.37" font-size="10.71" textLength="6.49" lengthAdjust="spacingAndGlyphs" fill="#000">0</text>
<line x1="904.70" y1="370.40" x2="911.20" y2="370.40" stroke="#000" stroke-width="1.5"/>
<text x="890.63" y="374.17" font-size="10.71" textLength="6.49" lengthAdjust="spacingAndGlyphs" fill="#000">2</text>
<line x1="904.70" y1="336.20" x2="911.20" y2="336.20" stroke="#000" stroke-width="1.5"/>
<text x="890.18" y="339.97" font-size="10.71" textLength="6.49" lengthAdjust="spacingAndGlyphs" fill="#000">4</text>
<line x1="904.70" y1="302.00" x2="911.20" y2="302.00" stroke="#000" stroke-width="1.5"/>
<text x="890.26" y="305.77" font-size="10.71" textLength="6.49" lengthAdjust="spacingAndGlyphs" fill="#000">6</text>
<line x1="928.90" y1="404.60" x2="928.90" y2="411.90" stroke="#000" stroke-width="1.5"/>
<text x="925.66" y="428.00" font-size="10.71" textLength="6.49" lengthAdjust="spacingAndGlyphs" fill="#000">0</text>
<line x1="966.25" y1="404.60" x2="966.25" y2="411.90" stroke="#000" stroke-width="1.5"/>
<line x1="1003.60" y1="404.60" x2="1003.60" y2="411.90" stroke="#000" stroke-width="1.5"/>
<text x="987.34" y="428.00" font-size="10.71" textLength="32.45" lengthAdjust="spacingAndGlyphs" fill="#000">20000</text>
<line x1="1040.95" y1="404.60" x2="1040.95" y2="411.90" stroke="#000" stroke-width="1.5"/>
<line x1="1078.30" y1="404.60" x2="1078.30" y2="411.90" stroke="#000" stroke-width="1.5"/>
<text x="1062.16" y="428.00" font-size="10.71" textLength="32.45" lengthAdjust="spacingAndGlyphs" fill="#000">40000</text>
<line x1="1115.65" y1="404.60" x2="1115.65" y2="411.90" stroke="#000" stroke-width="1.5"/>
<line x1="1153.00" y1="404.60" x2="1153.00" y2="411.90" stroke="#000" stroke-width="1.5"/>
<text x="1136.76" y="428.00" font-size="10.71" textLength="32.45" lengthAdjust="spacingAndGlyphs" fill="#000">60000</text>
<text x="1030.12" y="445.60" font-size="11.03" textLength="35.09" lengthAdjust="spacingAndGlyphs" fill="#000">counts</text>
<text transform="translate(878.60,345.40) rotate(-90)" x="-36.34" y="0" font-size="11.03" textLength="72.01" lengthAdjust="spacingAndGlyphs">log frequency</text>
<text transform="translate(1194.50,349.00) rotate(90)" x="-40.50" y="0" font-size="11.03" textLength="80.94" lengthAdjust="spacingAndGlyphs">histogram (full)</text>
<path d="M910.90,576.00 H1184.70" stroke="#0000ff" stroke-width="1.8" fill="none"/>
<rect x="1053.70" y="573.20" width="1.20" height="2.80" fill="#0000ff"/>
<rect x="1095.40" y="570.00" width="1.60" height="6.00" fill="#0000ff"/>
<rect x="1110.30" y="573.60" width="1.20" height="2.40" fill="#0000ff"/>
<rect x="1134.90" y="573.60" width="1.20" height="2.40" fill="#0000ff"/>
<rect x="1164.30" y="573.60" width="1.20" height="2.40" fill="#0000ff"/>
<rect x="910.90" y="517.10" width="273.80" height="119.80" fill="none" stroke="#000" stroke-width="1.5"/>
<line x1="904.40" y1="517.10" x2="910.90" y2="517.10" stroke="#000" stroke-width="1.5"/>
<text x="870.21" y="520.87" font-size="10.71" textLength="25.96" lengthAdjust="spacingAndGlyphs" fill="#000">5000</text>
<line x1="904.40" y1="547.05" x2="910.90" y2="547.05" stroke="#000" stroke-width="1.5"/>
<text x="870.21" y="550.82" font-size="10.71" textLength="25.96" lengthAdjust="spacingAndGlyphs" fill="#000">2500</text>
<line x1="904.40" y1="577.00" x2="910.90" y2="577.00" stroke="#000" stroke-width="1.5"/>
<text x="889.69" y="580.77" font-size="10.71" textLength="6.49" lengthAdjust="spacingAndGlyphs" fill="#000">0</text>
<line x1="904.40" y1="606.95" x2="910.90" y2="606.95" stroke="#000" stroke-width="1.5"/>
<text x="861.67" y="610.72" font-size="10.71" textLength="34.50" lengthAdjust="spacingAndGlyphs" fill="#000">−2500</text>
<line x1="904.40" y1="636.90" x2="910.90" y2="636.90" stroke="#000" stroke-width="1.5"/>
<text x="861.67" y="640.67" font-size="10.71" textLength="34.50" lengthAdjust="spacingAndGlyphs" fill="#000">−5000</text>
<line x1="911.90" y1="636.90" x2="911.90" y2="643.40" stroke="#000" stroke-width="1.5"/>
<text x="908.66" y="659.80" font-size="10.71" textLength="6.49" lengthAdjust="spacingAndGlyphs" fill="#000">0</text>
<line x1="978.10" y1="636.90" x2="978.10" y2="643.40" stroke="#000" stroke-width="1.5"/>
<text x="968.31" y="659.80" font-size="10.71" textLength="19.47" lengthAdjust="spacingAndGlyphs" fill="#000">500</text>
<line x1="1044.30" y1="636.90" x2="1044.30" y2="643.40" stroke="#000" stroke-width="1.5"/>
<text x="1031.10" y="659.80" font-size="10.71" textLength="25.96" lengthAdjust="spacingAndGlyphs" fill="#000">1000</text>
<line x1="1110.50" y1="636.90" x2="1110.50" y2="643.40" stroke="#000" stroke-width="1.5"/>
<text x="1097.30" y="659.80" font-size="10.71" textLength="25.96" lengthAdjust="spacingAndGlyphs" fill="#000">1500</text>
<line x1="1176.70" y1="636.90" x2="1176.70" y2="643.40" stroke="#000" stroke-width="1.5"/>
<text x="1163.68" y="659.80" font-size="10.71" textLength="25.96" lengthAdjust="spacingAndGlyphs" fill="#000">2000</text>
<text x="1044.91" y="677.90" font-size="11.03" textLength="7.19" lengthAdjust="spacingAndGlyphs" fill="#000">X</text>
<text transform="translate(850.90,578.00) rotate(-90)" x="-17.58" y="0" font-size="11.03" textLength="35.09" lengthAdjust="spacingAndGlyphs">counts</text>
<text transform="translate(1193.20,575.50) rotate(90)" x="-19.62" y="0" font-size="11.03" textLength="39.01" lengthAdjust="spacingAndGlyphs">cut in x</text>
<rect x="1108.70" y="519.90" width="73.20" height="16.00" rx="2" fill="#fff" fill-opacity="0.8" stroke="#cccccc" stroke-width="1"/>
<line x1="1111.30" y1="527.90" x2="1133.60" y2="527.90" stroke="#0000ff" stroke-width="1.8"/>
<text x="1136.49" y="531.67" font-size="10.71" textLength="40.54" lengthAdjust="spacingAndGlyphs" fill="#000">y=1024</text>
<path d="M911.20,748.00 H1185.20" stroke="#0000ff" stroke-width="1.8" fill="none"/>
<rect x="922.00" y="742.10" width="1.60" height="5.90" fill="#0000ff"/>
<rect x="971.10" y="745.80" width="1.20" height="2.20" fill="#0000ff"/>
<rect x="1068.90" y="688.90" width="1.80" height="59.10" fill="#0000ff"/>
<rect x="1129.15" y="743.00" width="2.50" height="5.00" fill="#0000ff"/>
<rect x="1178.10" y="688.90" width="1.80" height="59.10" fill="#0000ff"/>
<rect x="911.20" y="688.90" width="274.00" height="119.90" fill="none" stroke="#000" stroke-width="1.5"/>
<line x1="904.70" y1="688.90" x2="911.20" y2="688.90" stroke="#000" stroke-width="1.5"/>
<text x="870.21" y="692.67" font-size="10.71" textLength="25.96" lengthAdjust="spacingAndGlyphs" fill="#000">5000</text>
<line x1="904.70" y1="718.88" x2="911.20" y2="718.88" stroke="#000" stroke-width="1.5"/>
<text x="870.21" y="722.65" font-size="10.71" textLength="25.96" lengthAdjust="spacingAndGlyphs" fill="#000">2500</text>
<line x1="904.70" y1="748.85" x2="911.20" y2="748.85" stroke="#000" stroke-width="1.5"/>
<text x="889.69" y="752.62" font-size="10.71" textLength="6.49" lengthAdjust="spacingAndGlyphs" fill="#000">0</text>
<line x1="904.70" y1="778.82" x2="911.20" y2="778.82" stroke="#000" stroke-width="1.5"/>
<text x="861.67" y="782.60" font-size="10.71" textLength="34.50" lengthAdjust="spacingAndGlyphs" fill="#000">−2500</text>
<line x1="904.70" y1="808.80" x2="911.20" y2="808.80" stroke="#000" stroke-width="1.5"/>
<text x="861.67" y="812.57" font-size="10.71" textLength="34.50" lengthAdjust="spacingAndGlyphs" fill="#000">−5000</text>
<line x1="912.20" y1="808.80" x2="912.20" y2="815.30" stroke="#000" stroke-width="1.5"/>
<text x="908.96" y="831.90" font-size="10.71" textLength="6.49" lengthAdjust="spacingAndGlyphs" fill="#000">0</text>
<line x1="978.40" y1="808.80" x2="978.40" y2="815.30" stroke="#000" stroke-width="1.5"/>
<text x="968.61" y="831.90" font-size="10.71" textLength="19.47" lengthAdjust="spacingAndGlyphs" fill="#000">500</text>
<line x1="1044.60" y1="808.80" x2="1044.60" y2="815.30" stroke="#000" stroke-width="1.5"/>
<text x="1031.40" y="831.90" font-size="10.71" textLength="25.96" lengthAdjust="spacingAndGlyphs" fill="#000">1000</text>
<line x1="1110.80" y1="808.80" x2="1110.80" y2="815.30" stroke="#000" stroke-width="1.5"/>
<text x="1097.60" y="831.90" font-size="10.71" textLength="25.96" lengthAdjust="spacingAndGlyphs" fill="#000">1500</text>
<line x1="1177.00" y1="808.80" x2="1177.00" y2="815.30" stroke="#000" stroke-width="1.5"/>
<text x="1163.98" y="831.90" font-size="10.71" textLength="25.96" lengthAdjust="spacingAndGlyphs" fill="#000">2000</text>
<text x="1045.30" y="850.00" font-size="11.03" textLength="6.41" lengthAdjust="spacingAndGlyphs" fill="#000">Y</text>
<text transform="translate(850.90,749.85) rotate(-90)" x="-17.58" y="0" font-size="11.03" textLength="35.09" lengthAdjust="spacingAndGlyphs">counts</text>
<text transform="translate(1193.20,747.35) rotate(90)" x="-19.63" y="0" font-size="11.03" textLength="39.01" lengthAdjust="spacingAndGlyphs">cut in y</text>
<rect x="1109.00" y="692.00" width="72.50" height="15.30" rx="2" fill="#fff" fill-opacity="0.8" stroke="#cccccc" stroke-width="1"/>
<line x1="1111.60" y1="699.65" x2="1133.90" y2="699.65" stroke="#0000ff" stroke-width="1.8"/>
<text x="1136.80" y="703.42" font-size="10.71" textLength="40.54" lengthAdjust="spacingAndGlyphs" fill="#000">x=1024</text>
<rect x="1" y="849" width="1243" height="20" fill="#ececec"/>
<text x="5.44" y="864.00" font-size="11.13" textLength="174.65" lengthAdjust="spacingAndGlyphs" fill="#000">powered by QC: www.eso.org/HC</text>
<text x="935.82" y="864.00" font-size="11.13" textLength="303.86" lengthAdjust="spacingAndGlyphs" fill="#000">created by qc_rawdisp.py v1.2.3 on 2025-05-31T12:35:20</text>
</svg>
<script>
(function(){
var A='ABCDEFGHIJKLMNOPQRSTUVWXYZabcdefghijklmnopqrstuvwxyz0123456789+/';
var S='OOOPPPPPPPPPPPQQQQQRRRRSSSTTUUUVVWWWXXYYYZZZaaabbbbbccccccdddddddddddddddddddeeeeeeeeeeeeeeeeeedddddddddddeeeeeefffggghhijjkllmnoopqqrrstvx0358+//////////////////////////////////////////////OOPQQQQQQQQQQQRRRRRRSSSTTTUUUVVWWXXXYYZZZaaabbbbccccccddddddddddddddddeeeeeeeeeeeeeeeeeeeeeeeeeeeeeeeeeeeeeeeeefffggghhiijkklmnnopqqrrsstvy0368+//////////////////////////////////////////////OOQQQRRRRRRRRRRRSSSSSTTTUUUVVWWWXXYYZZZaaabbbbcccccddddddddddeeeeeeeeeeeeeeeeeeeeeeeeeeeeeeeeeeeeeeeeeeeeeeeeffffggghhiijjklmmnoppqrrsstuwy1368///////////////////////////////////////////////OOQRRRRRRRRRSSSSSSTTTTUUUVVVWWXXXYYZZZaabbbbcccccddddddddeeeeeeeeeeeeeeeeeeeeeeffffffffffffffeeeeeeeeeeeeeefffffggghhhijjkllmnoopqrrssttuwy1469///////////////////////////////////////////////OOQRRSSSSSSSSSSSTTTTTUUUVVVWWXXXYYZZaaabbbcccccdddddddeeeeeeeeeeeeeeeeeeeeefffffffffffffffffffffffeeeeeeefffffffggghhiijjklmmnopqqrssttuvwz1469///////////////////////////////////////////////OORSSSSSSSSSSSTTTTTUUUUVVVWWXXXYYZZaaabbbccccddddddeeeeeeeeeeeeeeeeeeffffffffffffffffffffffffffffffffffffffffffggghhhijjkklmnoopqrrstttuvxz1479///////////////////////////////////////////////OORSSSSSSSSTTTTTTTUUUUVVVWWWXXYYZZZaabbbccccdddddeeeeeeeeeeeeffffffffffffffffffffffffffffffffffffffffffffffffgggghhhiijjklmmnopqqrssttuuvxz2479///////////////////////////////////////////////OORSSSSSTTTTTTTTTUUUUVVVWWWXXYYYZZaabbbccccddddeeeeeeeeeefffffffffffffffffffffgggggggggggggggfffffffffffffffgggghhhiijjkklmnnopqrrsttuuuvxz2479///////////////////////////////////////////////OORTTTTTTTTTTTTTUUUUVVVVWWXXXYYZZaaabbccccddddeeeeeeeefffffffffffffffffffgggggggggggggggggggggggggfffffffgggggghhhhiijjkllmnoopqrssttuuvwxz2479///////////////////////////////////////////////OORTTTTTTTTTTTTUUUUUVVVWWWXXYYYZZaabbbcccddddeeeeeefffffffffffffffgggggggggggggggggggggggggggggggggggggggggggghhhhiijjkklmmnopqqrsstuuuvwxz2479///////////////////////////////////////////////OORTTTTTTTTTTTUUUUUVVVVWWWXXYYZZZaabbcccddddeeeeefffffffffffggggggggggggggggghhhhhhhhhhhhhhhhggggggggggggggghhhhhiijjjkllmnnopqrrsttuuuvwx02479/////////////////////////////////+/////////////OORTTTTTTTTTTUUUUUUVVVWWWXXXYYZZaabbbccddddeeeefffffffffggggggggggggggghhhhhhhhhhhhhhhhhhhhhhhhhhhggggggghhhhhhiiiijjkklmmnoopqrrsttuuuvwx02479////////////////////////////////8579+//////////OOSTTTTTTTTTUUUUUUVVVVWWWXXYYYZZaabbcccdddeeeefffffffgggggggggggghhhhhhhhhhhhhhiiiiiiiiiiihhhhhhhhhhhhhhhhhhhhiiiijjkkllmnnoppqrssttuuvvwxz1369//////////////////////////////+71y03579+///////OOSTTTTTTTTUUUUUUUVVVVWWWXXYYZZaabbbccdddeeeffffffgggggggggghhhhhhhhhhhhiiiiiiiiiiiiiiiiiiiiiiihhhhhhhhhhhhiiiiijjjkkklmmnnopqqrssttuuuvwxyz038/////////////////////////////+60urtvx0258+/////OOSTTTTTTTUUUUUUUVVVVWWWXXXYYZZaabbccdddeeefffffggggggggghhhhhhhhhhiiiiiiiiiiiiiijjjjjjjiiiiiiiiiiiiiiiiiiiiiiijjjkkkllmmnoopqqrssttuuuvvwxxwy39/////////////////////////+975ztpppqrtvy258+///OOSTTTTTTUUUUUUUUVVVVWWWXXYYYZZaabbccddeeeffffgggggggghhhhhhhhhiiiiiiiiiiijjjjjjjjjjjjjjjjjjjjiiiiiiiiiiiiiiijjjjkkkllmmnnoppqrrssttuuuuvvvuuvy4+////////////////////+986520xspppoooppruy258+/OOSTTTTTUUUUUUUUUVVVVWWWXXYYZZaabbccdddeeffffgggggghhhhhhhhhiiiiiiiiijjjjjjjjjjjjjjjjjjjjjjjjjjjjjjiiiiiijjjjjjjkkklllmmnooppqrrssttuuuuuuuuttuy4+////////////////+98642zxvtrppoooooooopruy26/OOSTTTUUUUUUUUUUVVVVWWWXXXYYZZaabbccddeeffffggggghhhhhhhhiiiiiiiijjjjjjjjjjkkkkkkkkkkkkkkkkkjjjjjjjjjjjjjjjjjjkkkklllmmnnooppqrrsstttuuuuuutttstx39////////////+97531zwusrqpppooooooooooopruz7OOSUUUUUUUUUUUUUVVVVWWWXXXYYZZabbccddeeefffgggghhhhhhhiiiiiiiijjjjjjjjjkkkkkkkkkkkkkkkkkkkkkkkkkkjjjjjjjjjjkkkkkklllmmmnnooppqrrsssttttttttttssssw28////////+87520ywusqqppppooooooooooooooops0OOSUUUUUUUUUUUUUVVVVWWWXXYYZZaabbccddeefffggghhhhhhiiiiiiiijjjjjjjjkkkkkkkkkklllllllllllllkkkkkkkkkkkkkkkkkkkkkllllmmmnnoooppqqrrsssttttttttsssrrrv059///+8642zxvtrqpppppppoooooooooooooooooosOOSUUUUUUUUUUUUVVVVVWWWXXYYZZaabccddeefffggghhhhhiiiiiiiijjjjjjjkkkkkkkkklllllllllllllllllllllkkkkkkkkkkkkkkklllllmmmnnnoooppqqrrrsssstttsssssrrrqrtx268642zxusrqppppppppoooooooooooonnnnnnnnoOOSUUUUUUUUUUUUVVVVWWWXXXYYZZabbccddeeffggghhhhiiiiiiijjjjjjjjkkkkkkkklllllllllllllllllllllllllllllkkkkkkllllllllmmmmnnnoooppqqqrrrsssssssssrrrrqqqqruz1zwusqppoooooooooooooooooooonnnnnnnnnnnOOSUUUUUUUUUUUUVVVVWWWXXYYZZaabbcddeeffggghhhiiiiiiijjjjjjjjkkkkkkkklllllllllllmmmmmmmmmlllllllllllllllllllllllmmmmmnnnnooopppqqqrrrrrsssrrrrrqqqqppppsusqpooooooooooooooooooooonnnnnnnnnnnnnnOOSUUUUUUUUUUUUVVVVWWWXXYYZZaabccddeffggghhhiiiiijjjjjjjjjkkkkkkkkllllllllllmmmmmmmmmmmmmmmmlllllllllllllllllmmmmmmmnnnnooopppqqqqrrrrrrrrrrqqqqpppppoopoooooooooooooooooooooonnnnnnnnnnnnnnnnOOSUUUUUUUUUUUVVVVVWWWXXYYZZabbccdeeffgghhhiiiijjjjjjjjjkkkkkkkkllllllllllmmmmmmmmmmmmmmmmmmmmmmllllllllllmmmmmmmmmnnnnnooooppppqqqqqqqqqqqqqqpppppooooooooooooooooooooooooonnnnnnnnnnnmmmmmmmOOSUUUUUUUUUUUVVVVVWWXXXYYZaabbcddeffgghhhiiijjjjjjjjkkkkkkkkkkllllllllllmmmmmmmmmmmmmmmmmmmmmmmmmmmmmmmmmmmmmmmmmmnnnnnnooooppppppqqqqqqqppppppooooooonnnnnnnnnoooooooonnnnnnnnnnnmmmmmmmmmmmOOSUUUUUUUUUUUVVVVWWWXXXYZZaabccdeeffghhhiiijjjjjjkkkkkkkkkkkkllllllllllmmmmmmmmmmmmmmmmmmmmmmmmmmmmmmmmmmmmmmmmmmnnnnnnnnooooooppppppppppppooooooonnnnnnnnnnnnnnnnnnnnnnnnnnnnnmmmmmmmmmmmmmmOOSUUUUUUUUUUUVVVVWWWXXYYZZabbcddeffgghhiiijjjjjkkkkkkkkkkkklllllllllllllmmmmmmmmmmmmmmmmmmmmmmmmmmmmmmmmmmmmmmmmmnnnnnnnnnnooooooooooooooooooonnnnnnnnnnnnnnnnnnnnnnnnnnnnnnmmmmmmmmmmmmmmmmmOOSUUUUUUUUUUUVVVVWWWXXYYZZabbcddeffghhiiijjjjkkkkkkkkkkkkklllllllllllllllmmmmmmmmmmmmmmmmmmmmmmmmmmmmmmmmmmmmmmmmmnnnnnnnnnnnnnnnnoooonnnnnnnnnnnmmmmmmmmmmmmmmmnnnnnnnmmmmmmmmmmmmmmllllllllOOSUUUUUUUUUUUVVVVWWWXXYYZaabccdeefgghhiijjjkkkkkkkkkkkkklllllllllllllllllllllmmmmmmmmmmmmmmmmmmmmmmmmmmmmmmmmmmmmmmmmmmmnnnnnnnnnnnnnnnnnnmmmmmmmmmmmmmmmmmmmmmmmmmmmmmmmmmmmmmmlllllllllllllOOSUUUUUUUUUUUVVVVWWXXXYZZaabcddeffghhiijjjkkkkkkkllllllllllllllllllllllllllllllllllllmmmmmmmmmmmmmmmmmmmmmmmmmmmmmmmmmmmmmmmmmmmmmmmmmmmmmmmmmmllllllllllllmmmmmmmmmmmmmmmmmllllkkkkkkkkkkkkkOOSUUUUUUUUUUVVVVVWWXXYYZZabbcddefgghiijjjkkkkkllllllllllllllllllllllllllllllllllllllllllmmmmmmmmmmmmmmmmnmmmmmmmmmmmmmmmmmmmmmmmlllllllllllllllllllllllllllllllllllllllllllllllljjjjiiiiiiiiiOOSUUUUUUUUUUVVVVWWWXXYYZZabbcdeefghhiijjkkkkllllllllllllllllllllllllllllllllllllllllllllllmmmmmmmmmmmmnnnnmmmmmmmmmmmmmlllllllllllllllllkkkkkkkkkkkkkkkllllllllllllllllllllllllkihhhhhhhhhhhhOOSUUUUUUUUUUVVVVWWWXXYYZaabccdeffghhijjjkkklllllllllllllllllllllllllllllllllllllllllllllllllmmmmmmmmmmnnnmmmmmmmmmmmlllllllllkkkkkkkkkkkkkkkkkkkkkkkkkkkkkkkkkkkllllllllllkkkkkkhggggggggggggOOSUUUUUUUUUUVVVVWWWXXYYZaabcddefgghiijjkkklllllllllllllllllllllllllkkkkkkkkkkkkkkkkklllllllllmmmmmmmmmmmmmmmmmmmmmlllllllkkkkkkkkjjjjjjjjjjjjjjjjjjjjkkkkkkkkkkkkkkkkkkkkkkkkkkjgffffffffffffOOSUUUUUUUUUUVVVVWWWXXYZZabbcdeefghhiijkkklllllllllllllllllllllllkkkkkkkkkkkkkkkkkkkkkkklllllllmmmmmmmmmmmmmmmmmmmllllllkkkkkkjjjjjjjjjjjiijjjjjjjjjjjjjjjjjjkkkkkkkkkkkkkkkkkkkjfffffffffffffOOSUUUUUUUUUUVVVVWWXXYYZZabbcdeffghhijjkkllllllmmmlllllllllllllkkkkkkkkkkkkkkkkkkkkkkkkkkkllllllmmmmmmmmmmmmmmmmmlllllkkkkkjjjjjjiiiiiiiiiiiiiiiiiiijjjjjjjjjjjjjjjjjjjjjjjjjjjjjffeeeeeeeeeeeOOSUUUUUUUUUUVVVWWWXXYYZZabccdeffghiijjkkllllmmmmmmmllllllllllkkkkkkkkkkkkkkjjjjjjjkkkkkkkkllllllmmmmmmmmmmmmmmllllllkkkkjjjjjiiiiiiihhhhhhhhhiiiiiiiiiiijjjjjjjjjjjjjjjjjjjjjjjifeeeeeeeeeeeeOOSUUUUUUUUUVVVVWWWXXYYZaabccdefgghiijkkklllmmmmmmmmlllllllllkkkkkkkkkkjjjjjjjjjjjjjjjjkkkkkklllllmmmmmmmmmmmmlllllkkkkkjjjjiiiiihhhhhhhhhhhhhhhhhhiiiiiiiiiiiiijjjjjjjjjjjjjjjjifeeeeeeeeeeeeOOSUUUUUUUUUVVVVWWWXXYYZaabcddefgghijjkkllllmmmmmmmmmllllllllkkkkkkkkjjjjjjjjjjjjjjjjjjjkkkkkklllllmmmmmmmmmmlllllkkkkjjjjiiiiihhhhhhhgggggghhhhhhhhhhhiiiiiiiiiiiiiiiiiiiiiiiiiieeeeeeeeeeeeeOOSUUUUUUUUUVVVVWWXXXYZZabbcdeefghhijjkkllllmmmmmmmmmlllllllkkkkkkkkjjjjjjjjjjjjjjjjjjjjjjkkkkkllllllmmmmmmllllllkkkkjjjjiiiihhhhhggggggggggggggghhhhhhhhhiiiiiiiiiiiiiiiiiiiiiiieddddddddddddOOSUUUUUUUUUVVVWWWXXYYZZabbcdeefghhijjkklllmmmmmmmmmmlllllllkkkkkkjjjjjjjjjjiiiiiiiijjjjjjjkkkkkllllllllllllllllkkkkjjjjiiiihhhhgggggggggggggggggggghhhhhhhhhhhiiiiiiiiiiiiiiiiiheddddddddddddOOSUUUUUUUUVVVVWWWXXYYZZabbcdeffghhijjkklllmmmmmmmmmmllllllkkkkkkjjjjjjjjiiiiiiiiiiiiijjjjjjkkkkklllllllllllllkkkkkjjjjiiiihhhhggggggffffffffggggggggghhhhhhhhhhhhhhhhhiiiiiiiiihdddddddddddddOOSUUUUUUUUVVVVWWWXXYYZaabccdeffghhijjkklllmmmmmmmmmmllllllkkkkkkjjjjjjjiiiiiiiiiiiiiiiijjjjjkkkkkklllllllllkkkkkkjjjjiiiihhhhgggggfffffffffffffggggggggghhhhhhhhhhhhhhhhhhhhhhhhdddddddddddddOOSUUUUUUUUVVVVWWXXXYYZaabccdeffghiijjkkllllmmmmmmmmllllllkkkkkkjjjjjjiiiiiiiiiiiiiiiiiiijjjjjkkkkkkkklllkkkkkkkjjjjjiiiihhhhgggggffffffffffffffffgggggggggghhhhhhhhhhhhhhhhhhhhhdccccccccccccOOSUUUUUUUVVVVWWWXXYYZZaabccdeffghhijjkkllllmmmmmmmmllllllkkkkkjjjjjjiiiiiiiiiiiiiiiiiiiiijjjjjjkkkkkkkkkkkkkkkjjjjjiiiihhhhgggggfffffffffffffffffffgggggggggggghhhhhhhhhhhhhhhhgdccccccccccccOOSUUUUUUUVVVVWWWXXYYZZaabcddeffghhijjkklllllmmmmmmlllllllkkkkkjjjjjjiiiiiiiiiiiiiiiiiiiiiijjjjjjjkkkkkkkkkkkjjjjjjiiiihhhhgggggffffffffffffffffffffffgggggggggggggghhhhhhhhhhhhgdccccccccccccOOSUUUUUUUVVVVWWWXXYYZZaabcddeffghhijjkkklllllmmmmlllllllkkkkkjjjjjjiiiiiiiiiihhhhiiiiiiiiiijjjjjjjjkkkkkkjjjjjjjiiiiihhhhgggggfffffffeeeeeeefffffffffffggggggggggggggggggggghhhgcccccccccccccOOSUUUUUUVVVVVWWWXXYYZZabbcddeffghhiijkkkllllllllllllllllkkkkkjjjjjiiiiiiiiihhhhhhhhiiiiiiiiijjjjjjjjjjjjjjjjjjjiiiiihhhhhggggfffffffeeeeeeeeeefffffffffffgggggggggggggggggggggggcccccccccccccOOSUUUUUUVVVVWWWXXXYYZZabbcddeffghhiijjkkkllllllllllllllkkkkkkjjjjjiiiiiiihhhhhhhhhhhiiiiiiiiiijjjjjjjjjjjjjjjiiiiiihhhhhgggggffffffeeeeeeeeeeeeeffffffffffffggggggggggggggggggggcbbbbbbbbbbbbOOSUUUUUUVVVVWWWXXXYYZZabbcddeffgghiijjkkkllllllllllllllkkkkkjjjjjiiiiiiihhhhhhhhhhhhhiiiiiiiiiiiijjjjjjjjjiiiiiiiihhhhhgggggfffffffeeeeeeeeeeeeeeffffffffffffffggggggggggggggggfcbbbbbbbbbbbbOOSUUUUUVVVVVWWWXXXYYZZabbccdeefgghiijjjkkklllllllllllllkkkkkjjjjjiiiiiihhhhhhhhhhhhhhhiiiiiiiiiiiiiiiiiiiiiiiiiihhhhhhhgggggffffffeeeeeeeeeeeeeeeeefffffffffffffffgggggggggggggfcbbbbbbbbbbbbOOSUUUUUVVVVVWWWXXXYYZZabbccdeefgghhiijjkkkklllllllllllkkkkkkjjjjjiiiiiihhhhhhhhhhhhhhhhiiiiiiiiiiiiiiiiiiiiiiiihhhhhhhgggggfffffffeeeeeeeeeeeeeeeeeeeffffffffffffffffffffggggggfbbbbbbbbbbbbbOOSUUUUUVVVVVWWWXXXYYZZaabccdeeffghhiijjjkkkklllllllllkkkkkkjjjjjiiiiiihhhhhhhhhhhhhhhhhhiiiiiiiiiiiiiiiiiiiihhhhhhhhhggggggffffffeeeeeeeeeeeeeeeeeeeeeffffffffffffffffffffffffffbbbbbbbbbbbbbOOSUUUUUVVVVVWWWXXXYYZZaabccddeffgghhiijjkkkkkllllllllkkkkkkjjjjjiiiiiihhhhhhhhhhhhhhhhhhhiiiiiiiiiiiiiiihhhhhhhhhhhhggggggfffffffeeeeeeeeeeeeeeeeeeeeeeeffffffffffffffffffffffffbaaaaaaaaaaaaOOSUUUUUVVVVVWWWXXXYYZZaabbcddeefgghhiijjjkkkkkkllllkkkkkkkkjjjjjiiiiihhhhhhhhhhhhhhhhhhhhhiiiiiiihhhhhhhhhhhhhhhhhhgggggggffffffeeeeeeeeeeeeeeeeeeeeeeeeeefffffffffffffffffffffebaaaaaaaaaaaaOOSUUUUUVVVVVWWWWXXYYZZaabbccdeeffgghhiijjjkkkkkkkkkkkkkkkkkjjjjiiiiiihhhhhhhhhhhhhhhhhhhhhhhhhhhhhhhhhhhhhhhhhhhhggggggggfffffffeeeeeeeeeeeeeeeeeeeeeeeeeeeeeefffffffffffffffffeaaaaaaaaaaaaaOOSUUUUUUVVVVVWWWXXYYYZZaabccddeffgghhiiijjjkkkkkkkkkkkkkkkjjjjjiiiiiihhhhhhhhhhhhhhhhhhhhhhhhhhhhhhhhhhhhhhhhhhhgggggggggffffffeeeeeeeeeeeeeeeeeeeeeeeeeeeeeeeeeeeeeeeeeeeeeeeeeaaaaaaaaaaaaaOOSUUUUUUVVVVVWWWXXXYYZZaabbcddeeffgghhiijjjjkkkkkkkkkkkkkkjjjjjiiiiiihhhhhhhhhhhhhhhhhhhhhhhhhhhhhhhhhhhhhhhhhggggggggggfffffffeeeeeeeeeeeeeeeeeeeeeeeeeeeeeeeeeeeeeeeeeeeeeeeeeaZZZZZZZZZZZZOOSUUUUUUVVVVVWWWWXXYYYZZabbccddeffgghhiiijjjjkkkkkkkkkkkkkjjjjjiiiiihhhhhhhhhhhhhhhhhhiiihhhhhhhhhhhhhhhhhhgggggggggggggffffffeeeeeeeeeeddddeeeeeeeeeeeeeeeeeeeeeeeeeeeeeeeeeeedaZZZZZZZZZZZZOOSUUUUUUUVVVVVWWWXXXYYZZaabbcddeeffgghhiiijjjjkkkkkkkkkkkkjjjjjiiiiihhhhhhhhhhhhhhhhiiiiiihhhhhhhhhhhhhhhggggggggggggggfffffffeeeeeeeeddddddddeeeeeeeeeeeeeeeeeeeeeeeeeeeeeeeeedaZZZZZZZZZZZZOOSUUUUUUUVVVVVWWWWXXYYYZZabbccddeffgghhhiijjjjkkkkkkkkkkkjjjjjjiiiiihhhhhhhhhhhhhhhiiiiiiihhhhhhhhhhhhhggggggggggggggggffffffeeeeeeeeddddddddddeeeeeeeeeeeeeeeeeeeeeeeddddddddddZZZZZZZZZZZZZOOSUUUUUUUUVVVVVWWWXXXYYZZaabbcddeeffgghhiiijjjjkkkkkkkkkkjjjjjjiiiiihhhhhhhhhhhhhhiiiiiiiiihhhhhhhhhhhggggggggggggggggfffffffeeeeeeedddddddddddddeeeeeeeeeeeeeedddddddddddddddddZYYZZZZZZZZZZOOSUUUUUUUUUVVVVVWWWXXYYYZZabbccddeffgghhhiiijjjjkkkkkkkkkjjjjjjiiiiihhhhhhhhhhhhhiiiiiiiiiihhhhhhhhhhgggggggggggggggggffffffeeeeeeedddddddddddddddeeeeeeeeeedddddddddddddddddddcZYYYYYYYYYYYYOOSUUUUUUUUUUVVVVWWWWXXYYZZaabbcddeeffgghhiiijjjjjkkkkkkkkjjjjjiiiiiihhhhhhhhhhhhiiiiiiiiiiiihhhhhhhhhggggggggggggggggfffffffeeeeeedddddddddddddddddeeeeeeddddddddddddddddddddddcZYYYYYYYYYYYYOOSUUUUUUUUUUVVVVVWWWXXXYYZZaabccddeffgghhhiiijjjjjkkkkkkjjjjjjiiiiiihhhhhhhhhhhiiiiiiiiiiiiihhhhhhhhgggggggggggggggggffffffeeeeeedddddddddddddddddddddddddddddddddddddddccccccccYYYYYYYYYYYYYOOSUUUUUUUUUUUVVVVVWWWXXYYZZaabbcddeeffgghhiiiijjjjjkkkkkjjjjjjiiiiiihhhhhhhhhhhiiiiiiiiiiiiihhhhhhhhggggggggggggggggfffffffeeeeeeddddddddddddddddddddddddddddddddddcccccccccccccYYYYYYYYYYYYYOOSUUUUUUUUUUUUVVVVWWWXXXYYZZabbccddeffgghhhiiijjjjjjkkkjjjjjjjiiiiiihhhhhhhhhhiiiiiiiiiiiiiihhhhhhhhgggggggggggggggfffffffeeeeeedddddddddddddddddddddddddddddddddccccccccccccccbYXXXXXXXXXXXXOOSUUUUUUUUUUUUUVVVVWWWXXYYZZaabbcddeeffgghhiiiijjjjjjjjjjjjjjjiiiiiihhhhhhhhhhiiiiiiiiiiiiiihhhhhhhhggggggggggggggffffffffeeeeeedddddddddddddddddddddddddddddddccccccccccccccccbYXXXXXXXXXXXXOOSUUUUUUUUUUUUUVVVVVWWXXXYYZZabbccdeeffgghhhiiijjjjjjjjjjjjjjjiiiiiihhhhhhhhhiiiiiiiiiiiiiiihhhhhhhhgggggggggggggffffffffeeeeeedddddddddddddddddddddddddddddddcccccccccccccccccbXXXXXXXXXXXXXOOSTTTUUUUUUUUUUUVVVVWWWXXYYZZaabccddeeffgghhiiiijjjjjjjjjjjjjjiiiiiiihhhhhhhhiiiiiiiiiiiiiiihhhhhhhggggggggggggffffffffffeeeeeedddddddddddddddddddddddddddddccccccccccbbbbbbbbbbXXXXXXXXXXXXXOOSTTTTUUUUUUUUUUVVVVWWWXXYYZZaabbcddeeffgghhhiiijjjjjjjjjjjjjjiiiiiiihhhhhhhiiiiiiiiiiiiiiiihhhhhhhgggggggggggffffffffffeeeeeedddddddddddddddddddddddddddddcccccccccbbbbbbbbbbbbXXXXXXXXXXXXXOOSTTTTTUUUUUUUUUUVVVVWWXXXYYZaabbccdeeffggghhiiiijjjjjjjjjjjjjiiiiiiihhhhhhhiiiiiiiiiiiiiiiihhhhhhhgggggggggfffffffffffeeeeeeeddddddddddddddddddddddddddddccccccccbbbbbbbbbbbbbaXWWWWWWXXXXXXOOSTTTTTTUUUUUUUUUVVVVWWWXXYYZZabbccddeeffgghhhiiijjjjjjjjjjjjjiiiiiiiihhhhhiiiiiiiiiiiiiiiiihhhhhhgggggggggfffffffffffeeeeeeedddddddddddddddddddddddddddcccccccccbbbbbbbbbbbbbbaXWWWWWWWWWWWWOOSTTTTTTTUUUUUUUUVVVVWWWXXYYZZaabccddeeffgghhhiiiijjjjjjjjjjjjiiiiiiiihhhhhiiiiiiiiiiiiiiiihhhhhhhggggggggfffffffffffeeeeeeeeddddddddddddddddddddddddddccccccccbbbbbbbbbbbbbbbbaXWWWWWWWWWWWWOOSTTTTTTTUUUUUUUUVVVVWWWXXYYZZaabccddeeffggghhiiiiijjjjjjjjjjiiiiiiiiiihhhiiiiiiiiiiiiiiiiihhhhhhhgggggggfffffffffffeeeeeeeedddddddddddddccdddddddddccccccccccbbbbbbbbbbbbbbbbbaXWWWWWWWWWWWWOOSTTTTTTTUUUUUUUUVVVVWWWXXYYZZaabbcddeeffggghhhiiiijjjjjjjjjjiiiiiiiiiiiiiiiiiiiiiiiiiiiiihhhhhhhgggggggffffffffffeeeeeeeeedddddddddddddcccccccccccccccccccccbbbbbbbbbbbaaaaaaaaWWWWWWWWWWWWWOOSTTTTTTTUUUUUUUUVVVVWWWXXYYZZaabbcddeefffgghhhiiiiijjjjjjjjjiiiiiiiiiiiiiiiiiiiiiiiiiiiiihhhhhhhggggggfffffffffeeeeeeeeeeddddddddddddddccccccccccccccccccccbbbbbbbbbbaaaaaaaaaaWWWWWWWWWWWWWOOSTTTTTTTUUUUUUUUVVVVWWWXXYYZZaabbccdeeeffgghhhhiiiiijjjjjjjiiiiiiiiiiiiiiiiiiiiiiiiiiiiihhhhhhhgggggggffffffffeeeeeeeeeedddddddddddddddccccccccccccccccccbbbbbbbbbbaaaaaaaaaaaaWWWWWWWWWWWWWOOSTTTTTTTUUUUUUUUVVVVWWWXXYYZZaabbccddeeffggghhhiiiiiijjjjjjiiiiiiiiiiiiiiiiiiiiiiiiiiiihhhhhhhhgggggggfffffffeeeeeeeeeeddddddddddddddddccccccccccccccccbbbbbbbbbbbaaaaaaaaaaaaaWWWWWWWWWWWWWOOSTTTTTTUUUUUUUUUVVVVWWWXXYYZZaabbccddeeffggghhhhiiiiiiijjjiiiiiiiiiiiiiiiiiiiiiiiiiiiihhhhhhhhhggggggfffffffeeeeeeeeeddddddddddddddddddcccccccccccccccbbbbbbbbbbaaaaaaaaaaaaaaaWVVVWWWWWWWWWOOSTTTTTTUUUUUUUUUVVVVWWWXXYYZZaabbccddeeffggghhhhiiiiiiiiiiiiiiiiiiiiiiiiiiiiiiiiiiiiihhhhhhhhhgggggggffffffeeeeeeeeedddddddddddddddddddcccccccccccccbbbbbbbbbbbaaaaaaaaaaaaaaaaWVVVVVVVVVVVVOOSTTTTTTUUUUUUUUUVVVVWWXXXYYZZaabbccddeeffggghhhhiiiiiiiiiiiiiiiiiiiiiiiiiiiiiiiiiiiiihhhhhhhhhgggggggffffffeeeeeeeeddddddddddddddddddddcccccccccccbbbbbbbbbbbaaaaaaaaaaaaaaaaaZWVVVVVVVVVVVVOOSTTTTTUUUUUUUUUVVVVWWWXXXYYZZaabbccddeefffggghhhhiiiiiiiiiiiiiiiiiiiiiiiiiiiiiiiiiiihhhhhhhhhhgggggggffffffeeeeeeedddddddddddddddddddddccccccccccbbbbbbbbbbaaaaaaaaaaaaaaaaaaaZWVVVVVVVVVVVVOOSTTTTTUUUUUUUUUVVVVWWWXXXYYZZaabbccddeefffggghhhhiiiiiiiiiiiiiiiiiiiiiiiiiiiiiiiiiihhhhhhhhhhhgggggggfffffeeeeeeeddddddddddddddddddddddcccccccccbbbbbbbbbaaaaaaaaaaaaaaaaaaaaaZWVVVVVVVVVVVVOOSTTTTTUUUUUUUUUVVVVWWWXXXYYZZaabbccddeefffggghhhhiiiiiiiiiiiiiiiiiiiiiiiiiiiiiiiiiihhhhhhhhhhhgggggggfffffeeeeeedddddddddddddddddddddddccccccccbbbbbbbbaaaaaaaaaaaaaaaaaaaaaaaZWVVVVVVVVVVVVOOSTTTTUUUUUUUUUUVVVVWWWXXXYYZZaabbccddeefffggghhhhiiiiiiiiiiiiiiiiiiiiiiiiiiiiiiiiiihhhhhhhhhhhgggggggfffffeeeeeedddddddddddddddddddddddcccccccbbbbbbbaaaaaaaaaaaaaaaaaaaaaaaaaZWVVVVVVVVVVVVOOSTTTTUUUUUUUUUUVVVVWWWXXYYYZZaabbccddeefffggghhhhhiiiiiiiiiiiiiiiiiiiiiiiiiiiiiiiiihhhhhhhhhhhgggggggfffffeeeeeeddddddddddddddddddddddcccccccbbbbbbbaaaaaaaaaaaaaaaaaaaaaaaaaaZWVVVVVVVVVVVVOOSTTTTUUUUUUUUUUVVVVWWWXXXYYZZaabccdddeefffggghhhhhiiiiiiiiiiiiiiiiiiiiiiiiiiiiiiiiiihhhhhhhhhhhggggggffffffeeeeeddddddddddddddddddddddccccccbbbbbbaaaaaaaaaaaaaaaaaaaaaaaaaaaaZWVVVVVVVVVVVVOOSTTTUUUUUUUUUUUVVVVWWWXXXYYZZaabccddeeeffgggghhhhhiiiiiiiiiiiiiiiiiiiiiiiiiiiiiiiiiiihhhhhhhhhhhggggggfffffeeeeeedddddddddddddddddddddccccccbbbbbaaaaaaaaaaaaaaaaaaaaaaaaaaaaaZWVVVVVVVVVVVVOOSTTTUUUUUUUUUUUVVVVWWWXXXYYZZaabccddeeeffgggghhhhiiiiiiiiiiiiiiiiiiiiiiiiiiiiiiiiiiiiihhhhhhhhhhggggggfffffeeeeeeddddddddddddddddddddccccccbbbbbaaaaaaaaaaaaaaaaaaaaaaaaaaaaaaZWVVVVVVVVVVVVOOSTTTUUUUUUUUUUUVVVVVWWXXXYYZZaabccddeeeffgggghhhhiiiiiiiiiiiiiiiiiiiiiiiiiiiiiiiiiiiiiihhhhhhhhhhggggggfffffeeeeeddddddddddddddddddddccccccbbbbbaaaaaaaZZZZZZZZZaaaaaaaaaaaaaaZWVVVVVVVVVVVVOOSTTTUUUUUUUUUUUUVVVVWWXXXYYZZabbccddeefffggghhhhhiiiiiiiiiiiiiiiiiiiiiiiiiiiiiiiiiiiiiiihhhhhhhhhhggggggffffeeeeeedddddddddddddddddddcccccbbbbbaaaaaaZZZZZZZZZZZZaaaaaaaaaaaaaZWVVVVVVVVVVVVOOSTTUUUUUUUUUUUUUVVVVWWWXXYYZZabbccddeefffggghhhhhiiiiiiiiiiiiiiiiiiiiiiiiiiiiiiiiiiiiiiiiihhhhhhhhhgggggfffffeeeeeedddddddddddddddddccccccbbbbaaaaaaZZZZZZZZZZZZZZaaaaaaaaaaaaZWVVVVVVVVVVVVOOSTTUUUUUUUUUUUUUVVVVWWWXXYYZZabbccddeefffggghhhhiiiiiiiiiiiiiiiiiiiiiiiiiiiiiiiiiiiiiiiiiiiihhhhhhhhgggggfffffeeeeedddddddddddddddddcccccbbbbbaaaaaZZZZZZZZZZZZZZZZaaaaaaaaaaaZWVVVVVVVVVVVVOOSTTUUUUUUUUUUUUUVVVVWWWXXYYZZabbccddeeffgggghhhhiiiiiiiiiiiiiiiiiiiiiiiiiiiiiiiiiiiiiiiiiiiiihhhhhhhhgggggffffeeeeeedddddddddddddddccccccbbbbaaaaaZZZZZZZZZZZZZZZZZaaaaaaaaaaaZWVVVVVVVVVVVVOOSTUUUUUUUUUUUUUUUVVVWWWXXYYZZabbccddeeffggghhhhhiiiiiiiiiiiijjjiiiiiiiiiiiiiiiiiiiiiiiiiiiiiiihhhhhhhhggggfffffeeeeeeddddddddddddddcccccbbbbbaaaaZZZZZZZZZZZZZZZZZZZaaaaaaaaaaZWVVVVVVVVVVVVOOSUUUUUUUUUUUUUUUUVVVVWWXXYYZZabbccddeeffggghhhhiiiiiiiiiijjjjjjjjiiiiiiiiiiiiiiiiiiiiiiiiiiiiiiihhhhhhgggggffffeeeeeedddddddddddddccccccbbbbaaaaZZZZZZZZZZZZZZZZZZZZZaaaaaaaaaZWVVVVVVVVVVVVOOSUUUUUUUUUUUUUUUUVVVVWWXXYYZZabbccddeeffggghhhhiiiiiiiiijjjjjjjjjjjiiiiiiiiiiiiiiiiiiiiiiiiiiiiiihhhhhhgggggffffeeeeeeddddddddddddccccccbbbbaaaaZZZZZZZZZZZZZZZZZZZZZaaaaaaaaaZWVVVVVVVVVVVVOOSUUUUUUUUUUUUUUUUVVVVWWXXYYZZabbccdeefffgghhhhiiiiiiiiijjjjjjjjjjjjjjjiiiiiiiiiiiiiiiiiiiiiiiiiiiihhhhhhggggfffffeeeeeeddddddddddccccccbbbbaaaaZZZZZZZYYYYZZZZZZZZZZZZaaaaaaaaZWVVVVVVVVVVVVOOSUUUUUUUUUUUUUUUUUVVVWWXXYYZZabbccdeeffggghhhhiiiiiiiijjjjjjjjjjjjjjjjjjjjjjjjjjjjjjiiiiiiiiiiiiiiihhhhhgggggffffeeeeeeddddddddddccccccbbbbaaaaZZZZZYYYYYYYZZZZZZZZZZZZZaaaaaZZWVVVVVVVVVVVVOOSUUUUUUUUUUUUUUUUUVVVWWXXYYZZabbccdeeffggghhhhiiiiiiijjjjjjjjjjjjjjjjjjjjjjjjjjjjjjjjjjjiiiiiiiiiiihhhhhhggggffffeeeeeeddddddddddcccccbbbbaaaaZZZZZYYYYYYYYYZZZZZZZZZZZZZZZZZZZVVVVVVVVVVVVVOOSUUUUUUUUUUUUUUUUUVVVWWXXYYZZabbcddeeffggghhhiiiiiiijjjjjjjjjjjjjjjjjjjjjjjjjjjjjjjjjjjjjjiiiiiiiiiihhhhhggggfffffeeeeedddddddddccccccbbbbaaaaZZZZZYYYYYYYYYYZZZZZZZZZZZZZZZZZZVVVVVVVVVVVVVOOSUUUUUUUUUUUUUUUUUVVVWWXXYYZZabbcddeeffgghhhhiiiiiijjjjjjjjjjjjjjjjjjjjjjjjjjjjjjjjjjjjjjjjiiiiiiiiiihhhhgggggffffeeeeeeddddddddcccccbbbbaaaaZZZZZYYYYYYYYYYYYZZZZZZZZZZZZZZZZZVVVVVVVVVVVVVOOSUUUUUUUUUUUUUUUUUVVVWWXXYYZZabbcddeeffgghhhiiiiiijjjjjjjjjjjjjjjjjjjjjjjjjjjjjjjjjjjjjjjjjjiiiiiiiiihhhhhggggffffeeeeeddddddddccccccbbbbaaaaZZZZZYYYYYYYYYYYYZZZZZZZZZZZZZZZZZVVVVVVVVVVVVVOOSUUUUUUUUUUUUUUUUUVVVWWXXYYZaabbcddeffggghhhiiiiiijjjjjjjjjjjjjjjjjjjjjjjjjjjjjjjjjjjjjjjjjjjiiiiiiiihhhhhggggffffeeeeedddddddccccccbbbbbaaaaZZZZYYYYYYYYYYYYYYZZZZZZZZZZZZZZZZVVVVVVVVVVVVVOOSUUUUUUUUUUUUUUUUUVVVWWXXYYZaabccddeffggghhhiiiiijjjjjjjjjjjjjjjjjjjjjjjjjjjjjjjjjjjjjjjjjjjjiiiiiiiihhhhhggggffffeeeeedddddddccccccbbbbaaaaZZZZZYYYYYYYYYYYYYYYZZZZZZZZZZZZZZZVVVVVVVVVVVVVOOSUUUUUUUUUUUUUUUUUVVVWWXXYYZaabccdeeffgghhhhiiiiijjjjjjjjjjjjjjjjjjjjjjjjjjjjjjjjjjjjjjjjjjjjiiiiiiiihhhhhggggffffeeeeeddddddccccccbbbbbaaaaZZZZYYYYYYYYYYYYYYYYZZZZZZZZZZZZZZYVVVVVVVVVVVVVOOSUUUUUUUUUUUUUUUUUVVVWWXXYYZaabccdeeffgghhhiiiiijjjjjjjjjjjjjjjjjjjjjjjjjjjjjjjjjjjjjjjjjjjjjiiiiiiiihhhhhggggffffeeeeeddddddccccccbbbbbaaaaZZZZYYYYYYYYYYYYYYYYYZZZZZZZZZZZZZYVVVVVVUUUUUUUOOSUUUUUUUUUUUUUUUUVVVVWWXXYZZaabccdeeffgghhhiiiiijjjjjjjjjjjjjjjjjjjjjjjjjjjjjjjjjjjjjjjjjjjjjiiiiiiiihhhhhggggffffeeeedddddddccccccbbbbaaaaZZZZZYYYYYYYYYYYYYYYYYYZZZZZZZZZZZZYVVVVUUUUUUUUUOOSUUUUUUUUUUUUUUUUVVVVWWXXYZZabbccdeeffgghhhiiiijjjjjjjjjjjjjjjjjjjjjjjjjjjjjjjjjjjjjjjjjjjjjjiiiiiiiihhhhhggggffffeeeeddddddccccccbbbbbaaaaZZZZZYYYYYYYYYYYYYYYYYYYZZZZZZZZZZZYVUUUUUUUUUUUUOOSUUUUUUUUUUUUUUUUVVVWWWXXYZZabbcddeeffgghhhiiiijjjjjjjjjjjjjjjjjjjjjjjjjjjjjjjjjjjjjjjjjjjjjiiiiiiiiihhhhhggggffffeeeeddddddccccccbbbbbaaaaZZZZZYYYYYYYYYYYYYYYYYYYYZZZZZZZZZZYVUUUUUUUUUUUUOOSUUUUUUUUUUUUUUUUVVVWWWXYYZZabbcddeefggghhhiiiijjjjjjjjjjjjjjjjjjjjjjjjjjjjjjjjjjjjjjjjjjjjjiiiiiiiiihhhhhggggffffeeeeddddddccccccbbbbbaaaaZZZZZYYYYYYYYYYYYYYYYYYYYYZZZZZZZZZYVUUUUUUUUUUUUOOSUUUUUUUUUUUUUUUUVVVWWXXYYZZabbcddeefggghhiiiiijjjjjjjjjjjjjjjjjjjjjjjjjjjjjjjjjjjjjjjjjjjjiiiiiiiiiihhhhhggggfffeeeeedddddccccccbbbbbbaaaaZZZZZYYYYYYYYYYYYYYYYYYYYYYYZZZZZZZYVUUUUUUUUUUUUOOSUUUUUUUUUUUUUUUVVVVWWXXYYZZabbcddeefggghhiiiiijjjjjjjjjjjjjjjjjjjjjjjjjjjjjjjjjjjjjjjjjjjjiiiiiiiiiihhhhhggggfffeeeeedddddccccccbbbbbbaaaaZZZZZYYYYYYYYYYYYYYYYYYYYYYYYYYYYYYYVUUUUUUUUUUUUOOSUUUUUUUUUUUUUUUVVVVWWXXYYZZabbcddeefggghhiiiiijjjjjjjjjjjjjjjjjjjjjjjjjjjjjjjjjjjjjjjjjjjiiiiiiiiiiihhhhhggggffffeeeedddddccccccbbbbbbaaaaZZZZZYYYYYYYYYYYYYYYYYYYYYYYYYYYYYYYVUUUUUUUUUUUUOOSUUUUUUUUUUUUUUUVVVVWWXXYYZZabbcddeefggghhiiiiijjjjjjjjjjjjjjjjjjjjjjjjjjjjjjjjjjjjjjjjjjjiiiiiiiiiihhhhhgggggffffeeeeddddddccccccbbbbbaaaaZZZZZZYYYYYYYYYYYYYYYYYYYYYYYYYYYYYYVUUUUUUUUUUUUOOSTTUUUUUUUUUUUUUVVVVWWXXYYZZabbcddeefggghhhiiiijjjjjjjjjjjjjjjjjjjjjjjjjjjjjjjjjjjjjjjjjjiiiiiiiiiiihhhhhgggggffffeeeeddddddccccccbbbbbaaaaaZZZZZYYYYYYYYYYYYYYYYYYYYYYYYYYYYYYVUUUUUUUUUUUUOOSTTTUUUUUUUUUUUUVVVVWWXXYYZZabbcddeeffgghhhiiiijjjjjjjjjjjjjjjjjjjjjjjjjjjjjjjjjjjjjjjjjjiiiiiiiiiiihhhhhhggggffffeeeeedddddccccccbbbbbaaaaaZZZZZZYYYYYYYYYYYYYYYYYYYYYYYYYYYYYVUUUUUUUUUUUUOOSTTTTUUUUUUUUUUUVVVVWWXXYYZZabbcddeeffgghhhiiiijjjjjjjjjjjjkkkjjjjjjjjjjjjjjjjjjjjjjjjjjjiiiiiiiiiiihhhhhhggggffffeeeeeddddddccccccbbbbbaaaaaZZZZZZYYYYYYYYYYYYYYYYYYYYYYYYYYYYVUUUUUUUUUUUUOOSTTTTTUUUUUUUUUUVVVVWWXXYYZZabbcddeeffgghhhiiiijjjjjjjjjjjkkkkkjjjjjjjjjjjjjjjjjjjjjjjjjiiiiiiiiiiiihhhhhhggggfffffeeeeeddddddccccccbbbbbaaaaaZZZZZZYYYYYYYYYYYYYYYYYYYYYYYYYYYVVVVUUUUUUUUUOOSTTTTTTUUUUUUUUUVVVVWWXXYYZZabbccdeeffgghhhiiiiijjjjjjjjjjkkkkkkjjjjjjjjjjjjjjjjjjjjjjjjiiiiiiiiiiiihhhhhhgggggfffffeeeeeddddddcccccbbbbbaaaaaZZZZZZZYYYYYYYYYYYYYYYYYYYYYYYYYYVVVVVVVVVVVVVOOSTTTTTTUUUUUUUUUVVVVWWXXYYZZabbccdeeffggghhhiiiijjjjjjjjjkkkkkkkkjjjjjjjjjjjjjjjjjjjjjjjjiiiiiiiiiiihhhhhhgggggfffffeeeeeeddddddcccccbbbbbaaaaaZZZZZZZZYYYYYYYYYYYYYYYYYYYYYYYYVVVVVVVVVVVVVOOSTTTTTTTUUUUUUUUVVVVWWXXYYZZaabccddeeffgghhhiiiijjjjjjjjjjkkkkkkkjjjjjjjjjjjjjjjjjjjjjjjjiiiiiiiiiiihhhhhhhgggggfffffeeeeeeddddddcccccbbbbbaaaaaZZZZZZZZZZYYYYYYYYYYYYYYYYYYYYYVVVVVVVVVVVVVOOSTTTTTTTUUUUUUUUVVVVWWXXYYZZaabccddeeffgghhhiiiiijjjjjjjjjkkkkkkkjjjjjjjjjjjjjjjjjjjjjjjjiiiiiiiiiiihhhhhhhggggggfffffeeeeeeddddddcccccbbbbbaaaaaZZZZZZZZZZZZZYYYYYYYZZZZZZZZZYVVVVVVVVVVVVVOOSTTTTTTTTUUUUUUUVVVVWWXXXYZZaabbcddeeffggghhhiiiijjjjjjjjjkkkkkkkjjjjjjjjjjjjjjjjjjjjjjjjiiiiiiiiiiihhhhhhhhggggggffffffeeeeeddddddccccbbbbbaaaaaaZZZZZZZZZZZZZZZZZZZZZZZZZZZZYVVVVVVVVVVVVVOOSTTTTTTTTUUUUUUUVVVVWWWXXYYZaabbccddeeffgghhhiiiiijjjjjjjjjkkkkkkjjjjjjjjjjjjjjjjjjjjjjjjiiiiiiiiiiihhhhhhhhgggggggffffffeeeeedddddcccccbbbbbaaaaaaZZZZZZZZZZZZZZZZZZZZZZZZZZZYVVVVVVVVVVVVVOOSTTTTTTTTTUUUUUUUVVVWWWXXYYZZabbccddeeffggghhhiiiijjjjjjjjjjjkkkjjjjjjjjjjjjjjjjjjjjjjjjjiiiiiiiiiiiihhhhhhhhgggggggffffffeeeeedddddcccccbbbbbaaaaaaZZZZZZZZZZZZZZZZZZZZZZZZZZYWVVVVVVVVVVVVOOSTTTTTTTTTUUUUUUUVVVWWWXXYYZZaabccddeefffgghhhiiiiijjjjjjjjjjjjjjjjjjjjjjjjjjjjjjjjjjjjjjiiiiiiiiiiiihhhhhhhhhgggggggffffffeeeeedddddccccbbbbbaaaaaaZZZZZZZZZZZZZZZZZZZZZZZZZZYWVVVVVVVVVVVVOOSTTTTTTTTTTUUUUUUVVVWWWXXYYZZaabbccddeeffggghhhiiiijjjjjjjjjjjjjjjjjjjjjjjjjjjjjjjjjjjjjjiiiiiiiiiiiihhhhhhhhhggggggggffffffeeeeeddddcccccbbbbbaaaaaaZZZZZZZZZZZZZZZZZZZZZZZZZYWVVVVVVVVVVVVOOSTTTTTTTTTTUUUUUUVVVVWWXXYYZZaabbccddeefffgghhhhiiiijjjjjjjjjjjjjjjjjjjjjjjjjjjjjjjjjjjjjiiiiiiiiiiiihhhhhhhhhhggggggggfffffeeeeedddddccccbbbbbaaaaaaZZZZZZZZZZZZZZZZZZZZZZZZZYWVVVVVVVVVVVVOORTTTTTTTTTTUUUUUUVVVVWWXXXYYZZabbccddeeeffggghhhiiiiijjjjjjjjjjjjjjjjjjjjjjjjjjjjjjjjjjjiiiiiiiiiiiiihhhhhhhhhhhgggggggffffffeeeedddddccccbbbbbaaaaaaaZZZZZZZZZZZZZZZZZZZZZZZZYWVVVVVVVVVVVVOORTTTTTTTTTTTUUUUUVVVVWWXXXYYZZaabbccddeefffggghhhiiiiijjjjjjjjjjjjjjjjjjjjjjjjjjjjjjjjjjiiiiiiiiiiiihhhhhhhhhhhhhgggggggfffffeeeeeddddccccbbbbbaaaaaaaZZZZZZZZZZZZZZZZZZZZZZZZYWVVVVVVVVVVVVOORTTTTTTTTTTTUUUUUVVVVWWWXXYYZZaabbccddeeeffggghhhhiiiiijjjjjjjjjjjjjjjjjjjjjjjjjjjjjjjjjiiiiiiiiiiiihhhhhhhhhhhhhgggggggfffffeeeedddddccccbbbbbaaaaaaZZZZZZZZZZZZZZZZZZZZZZZZZYWVVVVVVVVVVVVOORTTTTTTTTTTTUUUUUUVVVWWWXXYYZZaabbccdddeefffggghhhhiiiiijjjjjjjjjjjjjjjjjjjjjjjjjjjjjjjiiiiiiiiiiiihhhhhhhhhhhhhhhggggggfffffeeeeddddcccccbbbbaaaaaaaZZZZZZZZZZZZZZZZZZZZZZZZZYWVVVVVVVVVVVVOORTTTTTTTTTTTTUUUUUVVVWWWXXYYZZZaabbccddeeefffggghhhhiiiiiijjjjjjjjjjjjjjjjjjjjjjjjjjjjiiiiiiiiiiiiihhhhhhhhhhhhhhhggggggfffffeeeeddddccccbbbbbaaaaaaZZZZZZZZZZZZZZYYYYYYYYYYYYYWVVVVVVVVVVVVOORTTTTTTTTTTTTUUUUUVVVWWWXXYYYZZaabbccdddeefffgggghhhhiiiiiijjjjjjjjjjjjjjjjjjjjjjjjjjjiiiiiiiiiiiihhhhhhhhhhhhhhhhggggggffffeeeeddddccccbbbbbaaaaaZZZZZZZZZZZZYYYYYYYYYYYYYYYYYWVVVVVVVVVVVVOORTTTTTTTTTTTTUUUUUVVVWWWXXXYYZZaabbcccddeeefffgggghhhhiiiiiijjjjjjjjjjjjjjjjjjjjjjjjjiiiiiiiiiiiihhhhhhhhhhhhhhhhggggggfffffeeeedddccccbbbbbaaaaaZZZZZZZZZZYYYYYYYYYYYYYYYYYYYYVVVVVVVVVVVVVOORSTTTTTTTTTTTUUUUUVVVWWWXXXYYZZaabbbccdddeeefffgggghhhhhiiiiiijjjjjjjjjjjjjjjjjjjjjjiiiiiiiiiiihhhhhhhhhhhhhhhhhgggggggffffeeeedddccccbbbbaaaaaaZZZZZZZZYYYYYYYYYYYYYYYYYYYYYYYVVVVVVVVVVVVVOORSSSSTTTTTTTTTUUUUVVVWWWXXXYYZZaaabbcccdddeeefffgggghhhhhiiiiiijjjjjjjjjjjjjjjjjjjjiiiiiiiiiiihhhhhhhhhhhhhhhhhgggggggffffeeeedddccccbbbbaaaaaZZZZZZZYYYYYYYYYYYYYYYYYYYYYYYYYXVVVVVVVVVVVVVOORSSSSSTTTTTTTTUUUUVVVWWWXXXYYZZZaabbbccdddeeeeffffgggghhhhiiiiiijjjjjjjjjjjjjjjjjjiiiiiiiiiihhhhhhhhhhhhhhhhhggggggggfffffeeedddccccbbbbaaaaZZZZZZZYYYYYYYYYYYYYYYYYYYYYYYYYYYXVVVVVVVVVVVVVOORSSSSSSTTTTTTTUUUUVVVVWWXXXYYZZZaabbbcccdddeeeeffffgggghhhhiiiiiijjjjjjjjjjjjjjjjiiiiiiiiiihhhhhhhhhhhhhhhhgggggggggfffffeeedddccccbbbaaaaaZZZZZYYYYYYYYYYYYYYXXXXXXXXXXXXXXXXXVUUUUUUUUUUUUOORSSSSSSTTTTTTTUUUUVVVVWWXXXYYYZZaaabbbcccdddeeeeffffgggghhhhiiiiiijjjjjjjjjjjjjjiiiiiiiiihhhhhhhhhhhhhhhgggggggggggfffffeeedddccccbbbaaaaZZZZZYYYYYYYYYYXXXXXXXXXXXXXXXXXXXXXXXVUUUUUUUUUUUUOORSSSSSSSTTTTTTUUUUVVVVWWWXXYYYZZaaabbbcccddddeeeefffffggghhhhiiiiiijjjjjjjjjjjiiiiiiiiihhhhhhhhhhhhhhgggggggggggggfffffeeedddcccbbbbaaaZZZZZYYYYYYYYXXXXXXXXXXXXXXXXXXXXXXXXXXXUUUUUUUUUUUUUOORSSSSSSSTTTTTTUUUUVVVVWWWXXYYYZZZaaabbbcccdddddeeeeffffggghhhhiiiiiijjjjjjjjjiiiiiiiiihhhhhhhhhhhgggggggggggggggffffffeeedddcccbbbaaaaZZZZYYYYYYYXXXXXXXXXXXXXXXXXXXXXXXXXXXXXWUUUUUUUUUUUUUOORSSSSSSSSTTTTTUUUUVVVVWWWXXYYYZZZaaabbbccccdddddeeeeffffggghhhhiiiiiijjjjjjiiiiiiiiihhhhhhhhhhggggggggggggggggfffffffeeedddcccbbbaaaaZZZZYYYYYXXXXXXXXXXXXXXXXXXXXXXXXXXXXXXXXWUUUUUUUUUUUUUOORSSSSSSSSTTTTTUUUUVVVVWWWXXXYYZZZaaaabbbcccccddddeeeeffffggghhhhiiiiiiiiiiiiiiiiiihhhhhhhhhgggggggggggggggggfffffffeeeedddcccbbbaaaZZZZYYYYYXXXXXXXXXXXWWWWWWWWWWWWWWWWWWWWWWWWUUUUUUUUUUUUUOORSSSSSSSSTTTTTTUUUVVVVWWWXXXYYYZZZaaabbbbcccccdddddeeeefffggghhhhiiiiiiiiiiiiiiiihhhhhhhhgggggggggggggggffffffffffeeeeddddccbbbaaaZZZZYYYYXXXXXXXXWWWWWWWWWWWWWWWWWWWWWWWWWWWWWUTTTTTTTTTTTTOORSSSSSSSSSTTTTTUUUUVVVWWWXXXYYYZZZaaaabbbbcccccdddddeeeefffggghhhhhiiiiiiiiiiiihhhhhhhgggggggggggggfffffffffffffeeeeeddddcccbbaaaZZZZYYYYXXXXXXWWWWWWWWWWWWWWWWWWWWWWWWWWWWWWWWUTTTTTTTTTTTTOORSSSSSSSSSTTTTTUUUUVVVWWWXXXYYYZZZZaaabbbbbccccccddddeeeefffggghhhhhiiiiiiiiihhhhhhhgggggggggggfffffffffffffffeeeeeeddddcccbbaaaZZZYYYYXXXXXXWWWWWWWWWWWWWWWWWWWWWWWWWWWWWWWWWWTTTTTTTTTTTTTOORSSSSSSSSSTTTTTUUUUVVVWWWXXXYYYYZZZaaaabbbbbbcccccddddeeeefffggghhhhhhhhihhhhhhhhhgggggggggfffffffffffffffeeeeeeeeddddccccbbbaaaZZZYYYXXXXXXWWWWWWWWWWWWWWWWWWWWWWWWWWWWWWWWWWVTTTTTTTTTTTTTOORSSSSSSSSSTTTTTUUUUVVVWWWXXXXYYYZZZZaaaabbbbbbcccccddddeeeefffgggghhhhhhhhhhhhhhggggggggfffffffffffffeeeeeeeeeeedddddccccbbbaaaZZZYYYXXXXXWWWWWWWWWWWWWWVVVWWWWWWWWWWWWWWWWWWWVTTTTTTTTTTTTTOORSSSSSSSSSTTTTTUUUUVVVWWWWXXXYYYZZZZaaaaabbbbbbcccccddddeeeefffggggghhhhhhhhhggggggggfffffffffffeeeeeeeeeeeeeeddddddccccbbbaaaZZZYYYYXXXXWWWWWWWWWWVVVVVVVVVVVVVVWWWWWWWWWWWWWVTTTTTTTTTTTTTOOQSSSSSSSSSTTTTTUUUUVVVWWWWXXXYYYYZZZZaaaaabbbbbbbcccccdddeeeefffggggggggggggggggggfffffffffeeeeeeeeeeeeeeeddddddddcccccbbbaaaZZZYYYYXXXXWWWWWWWWWVVVVVVVVVVVVVVVVVVVWWWWWWWWWWVTTTTTTTTTTTTTOOQSSSSSSSSSSTTTTUUUUVVVVWWWXXXXYYYZZZZZaaaaaabbbbbbcccccdddeeeeffffgggggggggggggffffffffeeeeeeeeeeeeeedddddddddddcccccbbbbaaaZZZZYYYXXXXXWWWWWWWWVVVVVVVVVVVVVVVVVVVVVVVVVVVVVVVTTTTTTTTTTTTTOOQSSSSSSSSSSTTTTUUUUVVVVWWWXXXXYYYYZZZZZaaaaaabbbbbbcccccdddeeeeffffffggggggfffffffffeeeeeeeeeedddddddddddddddcccccccbbbbaaaaZZZYYYYXXXXWWWWWWWWVVVVVVVVVVVVVVVVVVVVVVVVVVVVVVVVTTTTTTTTTTTTTOOQSSSSSSSSSSTTTTTUUUVVVVWWWWXXXXYYYYZZZZZaaaaaabbbbbbcccccddddeeeeffffffffffffffffeeeeeeeedddddddddddddddccccccccccbbbbbaaaaZZZYYYYXXXXXWWWWWWWVVVVVVVVVVVVVVVVVVVVVVVVVVVVVVVVVTTTTTTTTTTTTTOOQSSSSSSSSSSTTTTTUUUUVVVWWWWXXXXYYYYZZZZZZaaaaaaabbbbbcccccddddeeeeeefffffffffeeeeeeeedddddddddddddcccccccccccccbbbbbbaaaaaZZZZYYYYXXXXWWWWWWWWVVVVVVVVVVVVVVVVVVVVVVVVVVVVVVVVVTTTTTTTTTTTTTOOQRSSSSSSSSSTTTTTUUUUVVVVWWWWXXXXYYYYZZZZZZaaaaaaabbbbbbccccdddddeeeeeeeeeeeeeeeeeeddddddddddcccccccccccccccbbbbbbbbaaaaaaZZZZYYYYXXXXXWWWWWWWWVVVVVVVVVVVVVVVVVVVVVVVVVVVVVVVVVTTTTTTTTTTTTTOOQRRRSSSSSSSSTTTTUUUUVVVVWWWWXXXXYYYYYZZZZZZZaaaaaabbbbbbcccccddddddeeeeeeeeeeddddddddddccccccccccccccbbbbbbbbbbbbaaaaaaZZZZZYYYYXXXXXWWWWWWWWVVVVVVVVVVVVVVVVVVVVVVVVVVVVVVVVVVTTTTTTTTTTTTTOOQRRRRSSSSSSSTTTTTUUUUVVVVWWWWXXXXYYYYYZZZZZZZaaaaaaabbbbbccccccdddddddddddddddddddccccccccccccbbbbbbbbbbbbbbbaaaaaaaaZZZZZZYYYYXXXXXXWWWWWWWWVVVVVVVVVVVVVVVVVVVVVVVVVVVVVVVVVVTTTTTTTTTTTTTOOQRRRRSSSSSSSTTTTTUUUUVVVVWWWWWXXXXYYYYYYZZZZZZaaaaaaabbbbbbccccccccddddddddddcccccccccccbbbbbbbbbbbbbbbaaaaaaaaaaaaZZZZZZYYYYYYXXXXXWWWWWWWWVVVVVVVVVVVVVVVVVVVVVVVVVVVVVVVVVVVTTTTTTTTTTTTTOOQRRRRRSSSSSSSTTTTTUUUUVVVVWWWWXXXXXYYYYYYZZZZZZZaaaaaaabbbbbbbcccccccccccccccccccccbbbbbbbbbbbbbaaaaaaaaaaaaaaaZZZZZZZZZYYYYYXXXXXXWWWWWWWWWVVVVVVVVVVVVVVVVVVVVVVVVVVVVVVVVVVVTTTTTTTTTTTTTOOQRRRRRRSSSSSSSTTTTUUUUVVVVVWWWWXXXXXXYYYYYYZZZZZZZaaaaaaabbbbbbbbbbcccccccccbbbbbbbbbbbbbaaaaaaaaaaaaaaaaZZZZZZZZZZZZYYYYYYYXXXXXXWWWWWWWWWVVVVVVVVVVVVVVVVVVVVVVVVVVVVVVVVVVVVTTTTTTTTTTTTTOOQRRRRRRRSSSSSSTTTTTUUUUVVVVVWWWWWXXXXXYYYYYYZZZZZZZZaaaaaaaabbbbbbbbbbbbbbbbbbbbbbbaaaaaaaaaaaaaaaZZZZZZZZZZZZZZZZYYYYYYYYXXXXXXXWWWWWWWWWVVVVVVVVVVVVVVVVVVVVVVVVVVVVVVVVVVVVVTTTTTTTTTTTTTOOQRRRRRRRRSSSSSSTTTTTUUUUVVVVVWWWWWXXXXXYYYYYYYZZZZZZZZaaaaaaaaaaaaabbbbbbbaaaaaaaaaaaaaaaaaZZZZZZZZZZZZZZZZZZYYYYYYYYYYYXXXXXXXXWWWWWWWWVVVVVVVVVVVVVVVVVVVVVVVVVVVVVVVVVVVVVVVTTTTTTTTTTTTTOOQRRRRRRRRRSSSSSSTTTTUUUUUVVVVVWWWWWXXXXXXYYYYYYYZZZZZZZZZZaaaaaaaaaaaaaaaaaaaaaaaaaZZZZZZZZZZZZZZZZZYYYYYYYYYYYYYYYYYXXXXXXXXXWWWWWWWWVVVVVVVVVVVVVVVVVVVVVVVVVVVVVVVVVVVVVVVVVTTTTTTTTTTTTTOOQRRRRRRRRRRSSSSSSTTTTUUUUUVVVVVWWWWWWXXXXXXYYYYYYYYZZZZZZZZZZZZZZZZZZZZZZZZZZZZZZZZZZZZZZZZZYYYYYYYYYYYYYYYYYYYYYXXXXXXXXXXXWWWWWWWWVVVVVVVVVVVVVVVVVVVVVVVVVVVVVVVVVVVVVVVVVVVTSSSSSSSSSSSSOOQQQQRRRRRRRRRSSSSSTTTTUUUUUVVVVVVWWWWWXXXXXXXYYYYYYYYYZZZZZZZZZZZZZZZZZZZZZZZZZZZZZZYYYYYYYYYYYYYYYYYYYYXXXXXXXXXXXXXXXXXWWWWWWWWWVVVVVVVVVVVVVVVUUUUUUUUVVVVVVVVVVVVVVVVVVVVVVTSSSSSSSSSSSSOOPQQQQQQRRRRRRRSSSSSTTTTTUUUUUVVVVVWWWWWWXXXXXXXYYYYYYYYYYYYYYYYYYYYYYYYYYYYYYYYYYYYYYYYYYYYYYYYXXXXXXXXXXXXXXXXXXXXXXWWWWWWWWWWVVVVVVVVVVVVUUUUUUUUUUUUUUUUUUUUVVVVVVVVVVVVVVVUSSSSSSSSSSSSSOOPQQQQQQQQRRRRRRSSSSSTTTTTUUUUUVVVVVVWWWWWWXXXXXXXXXYYYYYYYYYYYYYYYYYYYYYYYYYYYYYYYYYYXXXXXXXXXXXXXXXXXXXXXXXXXXXWWWWWWWWWWWWWVVVVVVVVVVUUUUUUUUUUUUUUUUUUUUUUUUUUUUUUUUUVVVVUUUSSSSSSSSSSSSSOOPQQQQQQQQQRRRRRRSSSSSTTTTTUUUUUUVVVVVVWWWWWWWXXXXXXXXXXXXYYYYYYYYXXXXXXXXXXXXXXXXXXXXXXXXXXXXXXXXXXWWWWWWWWWWWWWWWWWWWWWWWVVVVVVVVVUUUUUUUUUUUUUUUUUUUUUUUUUUUUUUUUUUUUUUUUUUUUSSSSSSSSSSSSSOOPQQQQQQQQQQQRRRRRSSSSSTTTTTTUUUUUVVVVVVVWWWWWWWXXXXXXXXXXXXXXXXXXXXXXXXXXXXXXXXXXXXXXXXXXWWWWWWWWWWWWWWWWWWWWWWWWWWWWWVVVVVVVVVVUUUUUUUUUUUUUUUUUUUUUUUUUUUUUUUUUUUUUUUUUUUUUUUSSSSSSSSSSSSSOOPPPPPPQQQQQQQRRRRRRSSSSSTTTTTUUUUUUVVVVVVVWWWWWWWWWXXXXXXXXXXXXXXXXXWWWWWWWWWWWWWWWWWWWWWWWWWWWWWWWWWWWWWWWWWWWWWVVVVVVVVVVVVVUUUUUUUUUUUUTTTTTTTTTTTTTTTUUUUUUUUUUUUUUUUUUUUUUSRRRRRRRRRRRROOPPPPPPPPQQQQQQQRRRRRSSSSSTTTTTTUUUUUUVVVVVVVWWWWWWWWWWWWWWWWWWWWWWWWWWWWWWWWWWWWWWWWWWWWWWWWWWWVVVVVVVVVVVVVVVVVVVVVVVVVVVVUUUUUUUUUUTTTTTTTTTTTTTTTTTTTTTTTTTTUUUUUUUUUUUUUUUTRRRRRRRRRRRRROOOPPPPPPPPPQQQQQQRRRRRSSSSSTTTTTTUUUUUUUVVVVVVVVWWWWWWWWWWWWWWWWWWWWWWWWWWWVVVVVVVVVVVVVVVVVVVVVVVVVVVVVVVVVVVVVVVVVVVVVVUUUUUUUUUTTTTTTTTTTTTTTTTTTTTTTTTTTTTTTTTTTTTTTTTTTTTTTRRRRRRRRRRRRROOOPPPPPPPPPPQQQQQQRRRRRSSSSSSTTTTTTUUUUUUUVVVVVVVVVVWWWWWWWWWWVVVVVVVVVVVVVVVVVVVVVVVVVVVVVVVVVVVVVVVVVVVVVVVVVVVVVVVVUUUUUUUUUUTTTTTTTTTTTTTTTTTTTTTTTTTTTTTTTTTTTTTTTTTTTTTTTTRRRRRRRRRRRRROOOOOOPPPPPPPPPQQQQQRRRRRSSSSSSTTTTTTTUUUUUUUVVVVVVVVVVVVVVVVVVVVVVVVVVVVVVVVVVVVVVVVVVVVVVVVVVVVVVUUUUUUUVVVVVVVVUUUUUUUUUUUUUTTTTTTTTTTSSSSSSSSSSSSSSSTTTTTTTTTTTTTTTTTTTTTTTTTRRRRQQQQQQQQQOOOOOOOOOPPPPPPPQQQQQRRRRRRSSSSSSTTTTTTUUUUUUUUVVVVVVVVVVVVVVVVVVVVVVVUUUUUUUUUUUUUUUUUUUUUUUUUUUUUUUUUUUUUUUUUUUUUUUUUUUUUUUTTTTTTTTSSSSSSSSSSSSSSSSSSSSSSSSTTTTTTTTTTTTTTTTTTTTRQQQQQQQQQQQQOOOOOOOOOOOPPPPPPQQQQQRRRRRRSSSSSSTTTTTTTUUUUUUUUUVVVVVVVVVVVVVVUUUUUUUUUUUUUUUUUUUUUUUUUUUUUUUUUUUUUUUUUUUUUUUUUUUUUUUUUUUTTTTTTTTSSSSSSSSSSSSSSSSSSSSSSSSSSSSSSTTTTTTTTTTTTTTTSQQQQQQQQQQQQQOOOOOOOOOOOOPPPPPPQQQQQRRRRRRSSSSSSTTTTTTTUUUUUUUUUUUUUUUUUUUUUUUUUUUUUUUUUUUUUUUUUUUUUUUUUUUUUUUUUUUUUUUUUUUUUUUUUUUUUUUUTTTTTTTSSSSSSSSSSSSSSSSSSSSSSSSSSSSSSSSSSSSSSTTTTTTTTTSQQQQQQQQQQQQQOOOOOOOOOOOOOPPPPPPQQQQQRRRRRRSSSSSSTTTTTTTTUUUUUUUUUUUUUUUUUUUUUUUUUUUUUUUUUUUUUUUUUUUUUUUUUUUUUUUUUUUUUUUUUUUUUUUUUUUUTTTTTTTTSSSSSSSSSSSRRRRRSSSSSSSSSSSSSSSSSSSSSSSSSSSSSSSSSQQQQQQQQQQQQQOOOOOOOOOOOOOOPPPPPQQQQQQRRRRRSSSSSSSTTTTTTTTUUUUUUUUUUUUUUUUUUUUUUUUUTTTTTTTTTTTTTTTTTTTTTTTTTTTTTTTTTTUUUUUUUUUUUUUUUTTTTTTTTSSSSSSSSSRRRRRRRRRRRRSSSSSSSSSSSSSSSSSSSSSSSSSSSSSQQQQQQQQQQQQQOOOOOOOOOOOOOOPPPPPPQQQQQRRRRRRSSSSSSSTTTTTTTTUUUUUUUUUUUUUUUUUUUUUTTTTTTTTTTTTTTTTTTTTTTTTTTTTTTTTTTTTTTTTTUUUUUUUUUTTTTTTTTTSSSSSSSSRRRRRRRRRRRRRRRRRSSSSSSSSSSSSSSSSSSSSSSSSSSQQQQQQQQQQQQQOONNNOOOOOOOOOOPPPPPQQQQQQRRRRRRSSSSSSTTTTTTTTTTUUUUUUUUUUUUUUUUUTTTTTTTTTTTTTTTTTTTTTTTTTTTTTTTTTTTTTTTTTTTTTTTTUTTTTTTTTTTTTSSSSSSSRRRRRRRRRRRRRRRRRRRSSSSSSSSSSSSSSSSSSSSSSSSSQQQQQQQQQQQQQOONNNNOOOOOOOOOOPPPPPPQQQQQQRRRRRRSSSSSSSSSTTTTTTTTTTTTTTTTTTTTTTTTTTTTTTTTTTTTTTTTTTTTTTTTTTTTTTTTTTTTTTTTTTTTTTTTTTTTTTTSSSSSSSRRRRRRRRRRRRRRRRRRRRRRRRRRRRRRRRRSSSSSSSSSSSSSSRQPPPPPPPPPPPPOONNNNNOOOOOOOOOOOPPPPPPPPQQQQQQQQQQRRRRRRRRRRRRRRSSSSSSSSSSSRRRRRRRRRRRRRRRRRRRRRRRRRRRRRRRRRRRRRRRRRRRRRRRRRRRRRRRRRRRRRRRRRRRQQQQQQQQQQQQQQQQQQQQQQQQQQQQQQQQQQQQQQQQQQQQQQQQQPPPPPPPPPPPPPOONNNNOOOOOOOOOOOOOOOOOOOPPPPPPPPPPPPPPPPPPPPPQQQQQQQQQQQQQQQQQQQQQPPPPPPPPPPPPPPPPPPPPPPPPPPPPPPPPPPPPPPPQQQQQQQQQQQQQPPPPPPPPPPPPPPPPPPPPPPPPPPPPPPPPPPPPPPPPPPPPPPPPPPPPPPPPPPOOOOOOOOOOOOOOOOOOOOOOOOOOOOOOOOOOOOOOOOOOOOOOOOOOOOOOOOOOOOOOOOOOOOOOOOOOOOOOOOOOOOOOOOOOOOOOOOOOOOOOOOOOOOOOOOOOOOOOOOOOOOOOOOOOOOOOOOOOOOOOOOOOOOOOOOOOOOOOOOOOOOOOOOOOOOOOOOOOOOOOOOOOOOOOOOOOOOOOOOOOOOOOOOOOOOOOOOOOOOOOOOOOOOOOOOOOOOOOOOOOOOOOOOOOOOOOOOOOOOOOOOOOOOOOOOOOOOOOOOOOOOOOOOOOOOOOOOOOOOOOOOOOOOOOOOOOOOOOOOOOOOOOOOOOOOOOOOOOOOOOOOOOOOOOOOOOOOOOOOOOOOOOOOOOOOOOOOOOOOOOOOOOOOOOOOO';var G=190,N=570,LO=-0.400000,HI=1.600000,SIG=0.240000,PHOT=0.010000;
var FT=[[69, 162, 100.7, 130, 0.55, 65.0, 104.7, 126.0, 166.0, 1.0], [47.8, 13.8, 58.4, 27, 0.4, 43.0, 63.2, 9.0, 31.8, 1.44], [58.4, 27, 65, 19, 0.4, 53.6, 69.8, 14.2, 31.8, 1.44], [47.8, 13.8, 47.8, 13.8, 0.6, 39.8, 55.8, 5.8, 21.8, 4.0], [65, 19, 65, 19, 0.5, 57.8, 72.2, 11.8, 26.2, 3.24], [41.2, 208.3, 41.2, 208.3, 0.9, 32.4, 50.0, 199.5, 217.1, 4.84], [0, 177, 570, 177, -0.18, -2.4, 572.4, 174.6, 179.4, 0.36], [0, 398, 570, 398, -0.18, -2.4, 572.4, 395.6, 400.4, 0.36], [0, 37, 570, 37, -0.12, -2.4, 572.4, 34.6, 39.4, 0.36]];var g=new Float32Array(G*G);for(var i=0;i<G*G;i++){g[i]=LO+(HI-LO)*A.indexOf(S.charAt(i))/63;}
var cv=document.getElementById('hm');var ctx=cv.getContext('2d');var im=ctx.createImageData(N,N);var d=im.data;
var s=123456789;function rnd(){s^=s<<13;s^=s>>>17;s^=s<<5;return ((s>>>0)%1000000)/1000000;}
function gauss(){var u=rnd()+1e-7,v=rnd();return Math.sqrt(-2*Math.log(u))*Math.cos(6.2831853*v);}
for(var y=0;y<N;y++){var gy=(y+0.5)*G/N-0.5;var y0=Math.floor(gy),fy=gy-y0;var y1=Math.min(G-1,y0+1);y0=Math.max(0,y0);
for(var x=0;x<N;x++){var gx=(x+0.5)*G/N-0.5;var x0=Math.floor(gx),fx=gx-x0;var x1=Math.min(G-1,x0+1);x0=Math.max(0,x0);
var v=(g[y0*G+x0]*(1-fx)+g[y0*G+x1]*fx)*(1-fy)+(g[y1*G+x0]*(1-fx)+g[y1*G+x1]*fx)*fy;
var sg=SIG*Math.min(1,Math.max(0.15,(v+0.02)/0.32));var px=x+0.5,py=y+0.5;for(var q=0;q<FT.length;q++){var F=FT[q];if(px<F[5]||px>F[6]||py<F[7]||py>F[8])continue;var dx=F[2]-F[0],dy=F[3]-F[1],L2=dx*dx+dy*dy||1e-6;var tt=((px-F[0])*dx+(py-F[1])*dy)/L2;tt=tt<0?0:(tt>1?1:tt);var ex=px-F[0]-tt*dx,ey=py-F[1]-tt*dy;v+=F[4]*Math.exp(-(ex*ex+ey*ey)/F[9]);}
var t=v+sg*gauss(); if(rnd()<PHOT)t=1.5;
var r,gg,b; if(t<0)t=0; if(t>1)t=1;
r=t<0.365079?0.0416+(1-0.0416)*t/0.365079:1; gg=t<0.365079?0:(t<0.746032?(t-0.365079)/0.380953:1); b=t<0.746032?0:(t-0.746032)/0.253968;
var k=(y*N+x)*4;d[k]=r*255;d[k+1]=gg*255;d[k+2]=b*255;d[k+3]=255;}}
ctx.putImageData(im,0,0);})();
</script>
</body></html>
